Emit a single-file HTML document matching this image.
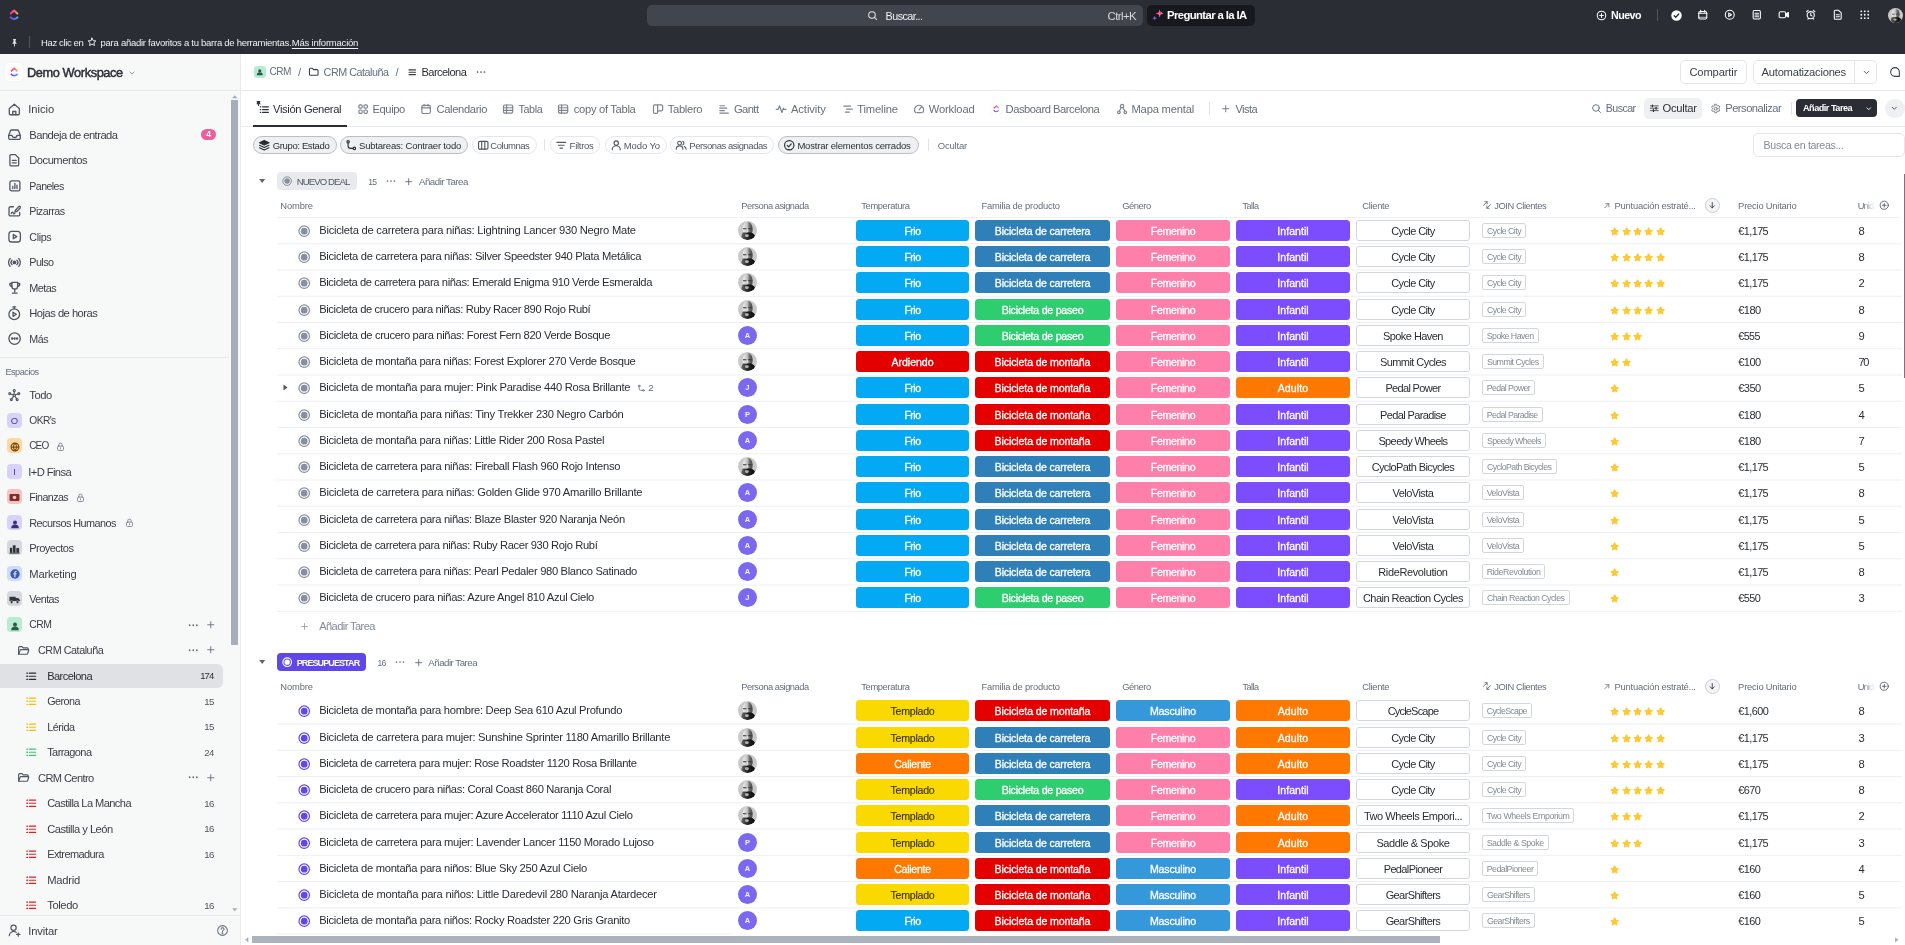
<!DOCTYPE html>
<html lang="es"><head><meta charset="utf-8"><title>Barcelona | CRM</title>
<style>
*{box-sizing:border-box;margin:0;padding:0}
html,body{width:1905px;height:945px;overflow:hidden;background:#fff}
body{font-family:"Liberation Sans",sans-serif;font-size:11.2px;color:#2a2e34;position:relative}
#app{position:absolute;left:0;top:0;width:1905px;height:945px;overflow:hidden;will-change:transform}
.a{position:absolute;white-space:nowrap}
svg{display:block;overflow:visible}
.ic{position:absolute}
#top{left:0;top:0;width:1905px;height:54px;background:#2a2e34}
#side{left:0;top:54px;width:240px;height:891px;background:#f7f8f8}
#sideb{left:240px;top:54px;width:1px;height:891px;background:#e8eaed}
.hl{height:1px;background:#e8eaed}
.vl{width:1px;background:#e0e3e7}
.chip{border:1px solid #e4e6ea;border-radius:9px;background:#fff}
.chip.on{background:#eef0f2;border-color:#b9bec7}
.rb{height:1px;background:#edeff2}
.pill{height:21px;line-height:22px;border-radius:3.5px;text-align:center;color:#fff;font-size:10.6px;-webkit-text-stroke:.3px currentColor}
.cl{height:21px;line-height:20.4px;border-radius:3px;text-align:center;color:#2a2e34;font-size:11px;border:1px solid #d3d7dd;background:#fff;left:1356.3px;width:113.3px;overflow:hidden}
.tag{left:1481.7px;height:15px;line-height:14.6px;border:1px solid #d3d7dd;border-radius:2px;font-size:8.8px;color:#838b97;text-align:center;background:#fff;overflow:hidden}
.av{width:19px;height:19px;border-radius:50%;background:#7b68ee;color:rgba(255,255,255,.9);font-size:7.5px;font-weight:700;text-align:center;line-height:19px;letter-spacing:0}
</style></head>
<body>
<div id="app">
<div class="a" id="top"></div>
<svg class="ic" style="left:9px;top:9px" width="10" height="12" viewBox="0 0 16 19" fill="none"><defs><linearGradient id="la1" x1="0" x2="1" y1="0" y2="0"><stop offset="0" stop-color="#ff2fa8"/><stop offset=".55" stop-color="#ff5d8a"/><stop offset="1" stop-color="#ffb52e"/></linearGradient><linearGradient id="lb1" x1="0" x2="1" y1="0" y2="0"><stop offset="0" stop-color="#8b3dff"/><stop offset=".5" stop-color="#6f6bff"/><stop offset="1" stop-color="#3fb4ff"/></linearGradient></defs><path d="M1.800 8 8 2.400l6.200 5.600" stroke="url(#la1)" stroke-width="3.100" stroke-linejoin="miter"/><path d="M1.700 12.300c3.400 5 9.200 5 12.600 0" stroke="url(#lb1)" stroke-width="3.100"/></svg>
<div class="a " style="left:647px;top:5px;width:496px;height:21px;background:#41454d;border-radius:5px"></div>
<svg class="ic" style="left:867px;top:10px" width="11" height="11" viewBox="0 0 16 16" fill="none" stroke="#e4e6ea" stroke-width="1.5" stroke-linecap="round" stroke-linejoin="round" ><circle cx="7.200" cy="7.200" r="4.800"/><path d="m10.800 10.800 3 3"/></svg>
<div class="a " style="left:885.6px;top:5.8px;height:20px;line-height:20px;font-size:10.8px;letter-spacing:-0.576px;color:#f0f1f3;">Buscar...</div>
<div class="a " style="left:1107.6px;top:5.8px;height:20px;line-height:20px;font-size:11.4px;letter-spacing:-0.593px;color:#d5d8dd;">Ctrl+K</div>
<div class="a " style="left:1147.3px;top:5px;width:107.5px;height:21px;background:#17191e;border-radius:5px"></div>
<svg class="ic" style="left:1152px;top:9px" width="12" height="12" viewBox="0 0 12 12"><path d="M7.600 0.400 8.600 3.400 11.600 4.400 8.600 5.400 7.600 8.400 6.600 5.400 3.600 4.400 6.600 3.400z" fill="#ff5fa2"/><path d="M8.600 1.600 9 3 10.400 3.400 9 4z" fill="#ffb13d"/><path d="M2.600 6.800 3.200 8.600 5 9.200 3.200 9.800 2.600 11.600 2 9.800 0.200 9.200 2 8.600z" fill="#7b68ee"/></svg>
<div class="a " style="left:1167px;top:5.3px;height:20px;line-height:20px;font-size:11.3px;letter-spacing:-0.601px;font-weight:700;color:#fff;">Preguntar a la IA</div>
<svg class="ic" style="left:1596.3px;top:9.7px" width="11" height="11" viewBox="0 0 16 16" fill="none" stroke="#fff" stroke-width="1.5" stroke-linecap="round" stroke-linejoin="round" ><circle cx="8" cy="8" r="6.200"/><path d="M8 5.200v5.600M5.200 8h5.600"/></svg>
<div class="a " style="left:1611px;top:5.3px;height:20px;line-height:20px;font-size:10.7px;letter-spacing:-0.534px;font-weight:700;color:#fff;">Nuevo</div>
<div class="a " style="left:1657px;top:9px;width:1px;height:12px;background:#50555e"></div>
<svg class="ic" style="left:1670.500px;top:9.700px" width="11" height="11" viewBox="0 0 16 16"><circle cx="8" cy="8" r="7.600" fill="#fff"/><path d="m4.600 8.300 2.300 2.300 4.400-4.800" fill="none" stroke="#2a2e34" stroke-width="1.900" stroke-linecap="round" stroke-linejoin="round"/></svg>
<svg class="ic" style="left:1697.25px;top:9.45px" width="11.5" height="11.5" viewBox="0 0 16 16" fill="none" stroke="#fff" stroke-width="1.5" stroke-linecap="round" stroke-linejoin="round" ><rect x="2.400" y="3.400" width="11.200" height="10.400" rx="2"/><path d="M2.400 6h11.200M5.200 1.800v2.200M10.800 1.800v2.200" /><path d="M2.400 11.600h11.200" opacity=".55"/></svg>
<svg class="ic" style="left:1724.25px;top:9.45px" width="11.5" height="11.5" viewBox="0 0 16 16" fill="none" stroke="#fff" stroke-width="1.5" stroke-linecap="round" stroke-linejoin="round" ><circle cx="8" cy="8" r="6.200"/><path d="M6.600 5.600v4.800l3.800-2.400z"/></svg>
<svg class="ic" style="left:1751.25px;top:9.45px" width="11.5" height="11.5" viewBox="0 0 16 16" fill="none" stroke="#fff" stroke-width="1.5" stroke-linecap="round" stroke-linejoin="round" ><rect x="3" y="2.200" width="10" height="11.600" rx="1.600"/><path d="M5.600 6h4.800M5.600 8.400h4.800M5.600 10.800h4.800"/></svg>
<svg class="ic" style="left:1778.25px;top:9.45px" width="11.5" height="11.5" viewBox="0 0 16 16" fill="none" stroke="#fff" stroke-width="1.5" stroke-linecap="round" stroke-linejoin="round" color="#fff"><rect x="1.600" y="3.800" width="9" height="8.400" rx="2"/><path d="m10.600 7 3.800-2.200v6.400L10.600 9z" fill="currentColor"/></svg>
<svg class="ic" style="left:1805.25px;top:9.45px" width="11.5" height="11.5" viewBox="0 0 16 16" fill="none" stroke="#fff" stroke-width="1.5" stroke-linecap="round" stroke-linejoin="round" ><circle cx="8" cy="8.600" r="5"/><path d="M8 6v2.800l1.800 1M2.200 3.800 4.400 2M13.800 3.800 11.600 2M4 14.200l1-1.200M12 14.200 11 13"/></svg>
<svg class="ic" style="left:1832.25px;top:9.45px" width="11.5" height="11.5" viewBox="0 0 16 16" fill="none" stroke="#fff" stroke-width="1.5" stroke-linecap="round" stroke-linejoin="round" ><path d="M3.200 3.200A1.400 1.400 0 0 1 4.600 1.800h4.600l3.600 3.600v7.400a1.400 1.400 0 0 1-1.400 1.400H4.600a1.400 1.400 0 0 1-1.400-1.400z"/><path d="M5.800 8h4.400M5.800 10.800h4.400"/></svg>
<svg class="ic" style="left:1859.25px;top:9.45px" width="11.5" height="11.5" viewBox="0 0 16 16" fill="none" stroke="none" stroke-width="1.4" stroke-linecap="round" stroke-linejoin="round" ><circle cx="3.2" cy="3.2" r="1.250" fill="#fff" stroke="none"/><circle cx="3.2" cy="8" r="1.250" fill="#fff" stroke="none"/><circle cx="3.2" cy="12.8" r="1.250" fill="#fff" stroke="none"/><circle cx="8" cy="3.2" r="1.250" fill="#fff" stroke="none"/><circle cx="8" cy="8" r="1.250" fill="#fff" stroke="none"/><circle cx="8" cy="12.8" r="1.250" fill="#fff" stroke="none"/><circle cx="12.8" cy="3.2" r="1.250" fill="#fff" stroke="none"/><circle cx="12.8" cy="8" r="1.250" fill="#fff" stroke="none"/><circle cx="12.8" cy="12.8" r="1.250" fill="#fff" stroke="none"/></svg>
<svg class="ic" style="left:1888px;top:7.5px" width="15" height="15" viewBox="0 0 20 20"><defs><clipPath id="ac1"><circle cx="10" cy="10" r="10"/></clipPath><linearGradient id="ag1" x1="0" x2="1" y1="0" y2="0"><stop offset="0" stop-color="#f1f1f1"/><stop offset=".45" stop-color="#c4c4c4"/><stop offset=".7" stop-color="#6a6a6a"/><stop offset="1" stop-color="#454545"/></linearGradient><linearGradient id="ab1" x1="0" x2="1" y1="0" y2="0"><stop offset="0" stop-color="#6e6e6e"/><stop offset=".4" stop-color="#2a2a2a"/><stop offset="1" stop-color="#0a0a0a"/></linearGradient><filter id="af1" x="-10%" y="-10%" width="120%" height="120%"><feGaussianBlur stdDeviation=".6"/></filter></defs><g clip-path="url(#ac1)"><rect width="20" height="20" fill="#c9c9c9"/><g filter="url(#af1)"><ellipse cx="10.200" cy="8.300" rx="5.300" ry="7.400" fill="url(#ag1)"/><path d="M5.300 7.500h3.500v1.200H5.300zM10.700 7.500h3.600v1.200h-3.600z" fill="#303030"/><path d="M9.300 8.500h1.300v3H9.300z" fill="#dcdcdc"/><path d="M4.800 12.600c1.500-.9 3.200.2 5.200-.4 2-.6 3.900-.3 5.200.4l2.600 2.400c-.8 3.400-4.400 5.400-7.800 5.400s-5.600-1.500-6.600-4z" fill="url(#ab1)"/><ellipse cx="9.300" cy="15.300" rx="2" ry="1.800" fill="#b0b0b0"/><ellipse cx="9.800" cy="13.400" rx="1.300" ry=".55" fill="#111"/></g></g></svg>
<svg class="ic" style="left:9.5px;top:37.5px" width="9" height="9" viewBox="0 0 16 16" fill="none" stroke="#e4e6ea" stroke-width="1.6" stroke-linecap="round" stroke-linejoin="round" color="#e4e6ea"><path d="M5.200 1.800h5.600v1l-1 .8v3.600l2 2.200v1H4.200v-1l2-2.200V3.600l-1-.8z" fill="currentColor" stroke="none"/><path d="M8 10.400v4"/></svg>
<div class="a " style="left:29px;top:36px;width:1px;height:12px;background:#50555e"></div>
<div class="a " style="left:41.1px;top:32.6px;height:20px;line-height:20px;font-size:9.5px;letter-spacing:-0.378px;color:#f0f1f3;">Haz clic en</div>
<svg class="ic" style="left:86.5px;top:37px" width="10" height="10" viewBox="0 0 16 16" fill="none" stroke="#f0f1f3" stroke-width="1.5" stroke-linecap="round" stroke-linejoin="round" ><path d="m8 1.800 1.900 4 4.300.5-3.200 3 .9 4.300L8 11.400l-3.900 2.200.9-4.300-3.200-3 4.300-.5z"/></svg>
<div class="a " style="left:100.6px;top:32.6px;height:20px;line-height:20px;font-size:9.5px;letter-spacing:-0.269px;color:#f0f1f3;">para añadir favoritos a tu barra de herramientas.</div>
<div class="a " style="left:291.8px;top:32.6px;height:20px;line-height:20px;font-size:9.5px;letter-spacing:-0.222px;color:#f0f1f3;text-decoration:underline;text-underline-offset:1.5px">Más información</div>
<div class="a" id="side"></div><div class="a" id="sideb"></div>
<div class="a hl" style="left:0px;top:90px;width:240px;height:1px;"></div>
<div class="a " style="left:5px;top:63px;width:17.5px;height:17.5px;background:#fff;border-radius:4px;box-shadow:0 0 1px rgba(0,0,0,.12)"></div>
<svg class="ic" style="left:9.6px;top:66.74px" width="8.6" height="10.32" viewBox="0 0 16 19" fill="none"><defs><linearGradient id="la2" x1="0" x2="1" y1="0" y2="0"><stop offset="0" stop-color="#ff2fa8"/><stop offset=".55" stop-color="#ff5d8a"/><stop offset="1" stop-color="#ffb52e"/></linearGradient><linearGradient id="lb2" x1="0" x2="1" y1="0" y2="0"><stop offset="0" stop-color="#8b3dff"/><stop offset=".5" stop-color="#6f6bff"/><stop offset="1" stop-color="#3fb4ff"/></linearGradient></defs><path d="M1.800 8 8 2.400l6.200 5.600" stroke="url(#la2)" stroke-width="3.100" stroke-linejoin="miter"/><path d="M1.700 12.300c3.400 5 9.200 5 12.600 0" stroke="url(#lb2)" stroke-width="3.100"/></svg>
<div class="a " style="left:26.9px;top:62.9px;height:20px;line-height:20px;font-size:12.8px;letter-spacing:-0.396px;color:#2a2e34;-webkit-text-stroke:.45px #2a2e34">Demo Workspace</div>
<svg class="ic" style="left:127.5px;top:68.5px" width="8" height="8" viewBox="0 0 16 16" fill="none" stroke="#838b97" stroke-width="1.8" stroke-linecap="round" stroke-linejoin="round" ><path d="m4 6 4 4 4-4"/></svg>
<svg class="ic" style="left:7.2px;top:102px" width="14.6" height="14.6" viewBox="0 0 16 16" fill="none" stroke="#4f5762" stroke-width="1.42" stroke-linecap="round" stroke-linejoin="round" color="#4f5762"><path d="M2.5 7.2 8 2.5l5.5 4.7V13a1 1 0 0 1-1 1h-9a1 1 0 0 1-1-1z"/><path d="M6.3 14v-3.6h3.4V14"/></svg>
<div class="a " style="left:28.3px;top:99px;height:20px;line-height:20px;font-size:11.2px;letter-spacing:-0.039px;color:#3a3f47;">Inicio</div>
<svg class="ic" style="left:7px;top:127.33px" width="15" height="15" viewBox="0 0 16 16" fill="none" stroke="#4f5762" stroke-width="1.39" stroke-linecap="round" stroke-linejoin="round" color="#4f5762"><path d="M1.8 9 3.6 4.2a1.5 1.5 0 0 1 1.4-1h6a1.5 1.5 0 0 1 1.4 1L14.2 9v2.8a1.4 1.4 0 0 1-1.4 1.4H3.2a1.4 1.4 0 0 1-1.4-1.4z"/><path d="M1.8 9h3.6a2.6 2.2 0 0 0 5.2 0h3.6"/></svg>
<div class="a " style="left:29.3px;top:124.53px;height:20px;line-height:20px;font-size:11.2px;letter-spacing:-0.526px;color:#3a3f47;">Bandeja de entrada</div>
<svg class="ic" style="left:7.2px;top:153.06px" width="14.6" height="14.6" viewBox="0 0 16 16" fill="none" stroke="#4f5762" stroke-width="1.42" stroke-linecap="round" stroke-linejoin="round" color="#4f5762"><path d="M3.2 3.2A1.4 1.4 0 0 1 4.6 1.8h4.6l3.6 3.6v7.4a1.4 1.4 0 0 1-1.4 1.4H4.6a1.4 1.4 0 0 1-1.4-1.4z"/><path d="M5.8 8h4.4M5.8 10.8h4.4"/></svg>
<div class="a " style="left:29.3px;top:150.06px;height:20px;line-height:20px;font-size:11.2px;letter-spacing:-0.512px;color:#3a3f47;">Documentos</div>
<svg class="ic" style="left:7.6px;top:178.99px" width="13.8" height="13.8" viewBox="0 0 16 16" fill="none" stroke="#4f5762" stroke-width="1.51" stroke-linecap="round" stroke-linejoin="round" color="#4f5762"><rect x="2.2" y="2.2" width="11.6" height="11.6" rx="2"/><path d="M5.6 11V8.6M8 11V5.2M10.4 11V7.2"/></svg>
<div class="a " style="left:29.3px;top:175.59px;height:20px;line-height:20px;font-size:10.6px;letter-spacing:-0.564px;color:#3a3f47;">Paneles</div>
<svg class="ic" style="left:7.15px;top:204.07px" width="14.7" height="14.7" viewBox="0 0 16 16" fill="none" stroke="#4f5762" stroke-width="1.41" stroke-linecap="round" stroke-linejoin="round" color="#4f5762"><path d="M7 3H3.6A1.4 1.4 0 0 0 2.2 4.400v7.200A1.4 1.4 0 0 0 3.6 13h8.800a1.400 1.400 0 0 0 1.400-1.400V9.200"/><path d="m9.200 6.800 3.600-4.000a1.100 1.100 0 0 1 1.600 1.500L10.700 8.200l-2.000.5z"/><path d="M4.600 10.400c.8-1.800 1.800-1.800 2.200-.6s1.200 1 1.800.2"/></svg>
<div class="a " style="left:29.3px;top:201.12px;height:20px;line-height:20px;font-size:10.7px;letter-spacing:-0.479px;color:#3a3f47;">Pizarras</div>
<svg class="ic" style="left:6.85px;top:229.3px" width="15.3" height="15.3" viewBox="0 0 16 16" fill="none" stroke="#4f5762" stroke-width="1.36" stroke-linecap="round" stroke-linejoin="round" color="#4f5762"><rect x="2" y="2.400" width="12" height="11.200" rx="3"/><path d="M6.600 5.800v4.400l3.600-2.200z"/></svg>
<div class="a " style="left:29.3px;top:226.65px;height:20px;line-height:20px;font-size:10.7px;letter-spacing:-0.378px;color:#3a3f47;">Clips</div>
<svg class="ic" style="left:7.05px;top:255.03px" width="14.9" height="14.9" viewBox="0 0 16 16" fill="none" stroke="#4f5762" stroke-width="1.4" stroke-linecap="round" stroke-linejoin="round" color="#4f5762"><circle cx="8" cy="8" r="1.300" fill="currentColor"/><path d="M5.400 5.600a3.400 3.400 0 0 0 0 4.800M10.600 5.600a3.400 3.400 0 0 1 0 4.800M3.400 3.800a6 6 0 0 0 0 8.400M12.600 3.800a6 6 0 0 1 0 8.400"/></svg>
<div class="a " style="left:29.3px;top:252.18px;height:20px;line-height:20px;font-size:10.8px;letter-spacing:-0.576px;color:#3a3f47;">Pulso</div>
<svg class="ic" style="left:6.75px;top:280.26px" width="15.5" height="15.5" viewBox="0 0 16 16" fill="none" stroke="#4f5762" stroke-width="1.34" stroke-linecap="round" stroke-linejoin="round" color="#4f5762"><path d="M5 2.400h6v4a3 3 0 0 1-6 0z"/><path d="M5 3.600H3a2 2 0 0 0 2.200 2.800M11 3.600h2a2 2 0 0 1-2.200 2.800M8 9.400v2.800M5.600 13.600h4.800"/></svg>
<div class="a " style="left:29.3px;top:277.71px;height:20px;line-height:20px;font-size:10.9px;letter-spacing:-0.553px;color:#3a3f47;">Metas</div>
<svg class="ic" style="left:6.25px;top:304.59px" width="16.5" height="16.5" viewBox="0 0 16 16" fill="none" stroke="#4f5762" stroke-width="1.26" stroke-linecap="round" stroke-linejoin="round" color="#4f5762"><circle cx="8" cy="9" r="5.200"/><path d="M6.800 7v4l3.200-2zM6.600 1.800h2.800M8 1.800v2"/></svg>
<div class="a " style="left:29.3px;top:303.24px;height:20px;line-height:20px;font-size:11.2px;letter-spacing:-0.520px;color:#3a3f47;">Hojas de horas</div>
<svg class="ic" style="left:6.9px;top:331.47px" width="15.2" height="15.2" viewBox="0 0 16 16" fill="none" stroke="#4f5762" stroke-width="1.37" stroke-linecap="round" stroke-linejoin="round" color="#4f5762"><circle cx="8" cy="8" r="6"/><circle cx="5.400" cy="8" r=".6" fill="currentColor"/><circle cx="8" cy="8" r=".6" fill="currentColor"/><circle cx="10.600" cy="8" r=".6" fill="currentColor"/></svg>
<div class="a " style="left:29.3px;top:328.77px;height:20px;line-height:20px;font-size:10.7px;letter-spacing:-0.423px;color:#3a3f47;">Más</div>
<div class="a " style="left:201px;top:128.5px;width:15px;height:11.5px;background:#ee5e99;border-radius:6px;color:#fff;font-size:8.5px;font-weight:700;text-align:center;line-height:11.5px;letter-spacing:0">4</div>
<div class="a hl" style="left:0px;top:357px;width:229px;height:1px;"></div>
<div class="a " style="left:5.4px;top:361.6px;height:20px;line-height:20px;font-size:9.2px;letter-spacing:-0.498px;color:#656f7d;">Espacios</div>
<svg class="ic" style="left:7.05px;top:388.05px" width="14.5" height="14.5" viewBox="0 0 16 16" fill="none" stroke="#4f5762" stroke-width="1.25" stroke-linecap="round" stroke-linejoin="round" ><circle cx="8" cy="8" r="1.400"/><circle cx="8" cy="2.800" r="1.100"/><circle cx="3" cy="6.200" r="1.100"/><circle cx="13" cy="6.200" r="1.100"/><circle cx="4.800" cy="12.800" r="1.100"/><circle cx="11.200" cy="12.800" r="1.100"/><path d="M8 6.600V3.900M6.700 7.500 4 6.600M9.300 7.500l2.700-.9M7.200 9.200l-1.800 2.600M8.800 9.200l1.800 2.600"/></svg>
<div class="a " style="left:29.3px;top:385.3px;height:20px;line-height:20px;font-size:11.2px;letter-spacing:-0.445px;color:#3a3f47;">Todo</div>
<div class="a " style="left:7px;top:412.9px;width:15px;height:15px;background:#d8d2fb;color:#46426b;font-size:9.5px;text-align:center;line-height:15.5px;letter-spacing:0;border-radius:4px">O</div>
<div class="a " style="left:29.3px;top:410.8px;height:20px;line-height:20px;font-size:10.2px;letter-spacing:-0.555px;color:#3a3f47;">OKR's</div>
<div class="a " style="left:7px;top:438.4px;width:15px;height:15px;background:#fbd9a0;color:#46426b;font-size:9.5px;text-align:center;line-height:15.5px;letter-spacing:0;border-radius:4px"></div>
<svg class="ic" style="left:9.500px;top:441.5px" width="10" height="10" viewBox="0 0 12 12" fill="none" stroke="#7a4a12" stroke-width="1.500"><circle cx="6" cy="6" r="4.600"/><path d="M1.400 6h9.200M6 1.400c-2.400 2.600-2.400 6.600 0 9.200M6 1.400c2.400 2.600 2.400 6.600 0 9.200"/></svg>
<div class="a " style="left:29.3px;top:436.3px;height:20px;line-height:20px;font-size:10px;letter-spacing:-0.900px;color:#3a3f47;">CEO</div>
<svg class="ic" style="left:54.7px;top:440.6px" width="11" height="11" viewBox="0 0 16 16" fill="none" stroke="#7b8491" stroke-width="1.3" stroke-linecap="round" stroke-linejoin="round" ><rect x="3.600" y="7.400" width="8.800" height="6.400" rx="1.600"/><path d="M5.600 7.400V5.400a2.400 2.400 0 0 1 4.800 0v2M8 10v1.400"/></svg>
<div class="a " style="left:7px;top:463.9px;width:15px;height:15px;background:#d8d2fb;color:#46426b;font-size:9.5px;text-align:center;line-height:15.5px;letter-spacing:0;border-radius:4px">I</div>
<div class="a " style="left:28.3px;top:461.8px;height:20px;line-height:20px;font-size:11.2px;letter-spacing:-0.596px;color:#3a3f47;">I+D Finsa</div>
<div class="a " style="left:7px;top:489.4px;width:15px;height:15px;background:#f7c1c1;color:#46426b;font-size:9.5px;text-align:center;line-height:15.5px;letter-spacing:0;border-radius:4px"></div>
<svg class="ic" style="left:9px;top:493px" width="11" height="9" viewBox="0 0 12 10"><rect x=".5" y="1" width="11" height="8" rx="1.500" fill="#7a2f2f"/><circle cx="6" cy="5" r="2" fill="#f7c1c1"/></svg>
<div class="a " style="left:29.3px;top:487.3px;height:20px;line-height:20px;font-size:10.7px;letter-spacing:-0.575px;color:#3a3f47;">Finanzas</div>
<svg class="ic" style="left:74.5px;top:491.6px" width="11" height="11" viewBox="0 0 16 16" fill="none" stroke="#7b8491" stroke-width="1.3" stroke-linecap="round" stroke-linejoin="round" ><rect x="3.600" y="7.400" width="8.800" height="6.400" rx="1.600"/><path d="M5.600 7.400V5.400a2.400 2.400 0 0 1 4.800 0v2M8 10v1.400"/></svg>
<div class="a " style="left:7px;top:514.9px;width:15px;height:15px;background:#d8d2fb;color:#46426b;font-size:9.5px;text-align:center;line-height:15.5px;letter-spacing:0;border-radius:4px"></div>
<svg class="ic" style="left:8.500px;top:517.5px" width="12" height="11" viewBox="0 0 14 12"><circle cx="7" cy="4.800" r="2.300" fill="#3c2f7a"/><path d="M2.600 11.600a4.400 4.400 0 0 1 8.800 0z" fill="#3c2f7a"/></svg>
<div class="a " style="left:29.3px;top:512.8px;height:20px;line-height:20px;font-size:10.9px;letter-spacing:-0.566px;color:#3a3f47;">Recursos Humanos</div>
<svg class="ic" style="left:123.9px;top:517.1px" width="11" height="11" viewBox="0 0 16 16" fill="none" stroke="#7b8491" stroke-width="1.3" stroke-linecap="round" stroke-linejoin="round" ><rect x="3.600" y="7.400" width="8.800" height="6.400" rx="1.600"/><path d="M5.600 7.400V5.400a2.400 2.400 0 0 1 4.800 0v2M8 10v1.400"/></svg>
<div class="a " style="left:7px;top:540.4px;width:15px;height:15px;background:#d5d8dc;color:#46426b;font-size:9.5px;text-align:center;line-height:15.5px;letter-spacing:0;border-radius:4px"></div>
<svg class="ic" style="left:9px;top:543.5px" width="11" height="10" viewBox="0 0 12 10"><path d="M1 9V3.500h2.500V9zM4.200 9V1h3v8zM8 9V4h3v5z" fill="#2f333a"/><path d="M.5 9.500h11" stroke="#2f333a"/></svg>
<div class="a " style="left:29.3px;top:538.3px;height:20px;line-height:20px;font-size:11.1px;letter-spacing:-0.585px;color:#3a3f47;">Proyectos</div>
<div class="a " style="left:7px;top:565.9px;width:15px;height:15px;background:#cfdcf7;color:#46426b;font-size:9.5px;text-align:center;line-height:15.5px;letter-spacing:0;border-radius:4px"></div>
<svg class="ic" style="left:9.500px;top:569px" width="10" height="10" viewBox="0 0 12 12"><circle cx="6" cy="6" r="5.600" fill="#3b5ba8"/><path d="M6.600 10V6.600h1.200l.2-1.400H6.600v-.8c0-.4.200-.7.700-.7H8V2.500c-.2 0-.6-.1-1.100-.1-1.100 0-1.800.7-1.800 1.900v.9H4v1.400h1.100V10z" fill="#cfdcf7"/></svg>
<div class="a " style="left:29.3px;top:563.8px;height:20px;line-height:20px;font-size:11.2px;letter-spacing:-0.212px;color:#3a3f47;">Marketing</div>
<div class="a " style="left:7px;top:591.4px;width:15px;height:15px;background:#d5d8dc;color:#46426b;font-size:9.5px;text-align:center;line-height:15.5px;letter-spacing:0;border-radius:4px"></div>
<svg class="ic" style="left:8.800px;top:594.7px" width="11.500" height="9.500" viewBox="0 0 13 10"><path d="M.5 1.500h7v5h-7zM7.500 3h2.700l2.300 2.200v1.300h-5z" fill="#2f333a"/><circle cx="3" cy="7.600" r="1.600" fill="#2f333a" stroke="#d5d8dc" stroke-width=".6"/><circle cx="9.600" cy="7.600" r="1.600" fill="#2f333a" stroke="#d5d8dc" stroke-width=".6"/></svg>
<div class="a " style="left:29.3px;top:589.3px;height:20px;line-height:20px;font-size:10.8px;letter-spacing:-0.584px;color:#3a3f47;">Ventas</div>
<div class="a " style="left:7px;top:616.9px;width:15px;height:15px;background:#b9ead3;color:#46426b;font-size:9.5px;text-align:center;line-height:15.5px;letter-spacing:0;border-radius:4px"></div>
<svg class="ic" style="left:8.500px;top:619.5px" width="12" height="11" viewBox="0 0 14 12"><circle cx="7" cy="4.800" r="2.300" fill="#2a5a45"/><path d="M2.600 11.600a4.400 4.400 0 0 1 8.800 0z" fill="#2a5a45"/></svg>
<div class="a " style="left:29.3px;top:614.8px;height:20px;line-height:20px;font-size:10.4px;letter-spacing:-0.504px;color:#3a3f47;">CRM</div>
<svg class="ic" style="left:186.75px;top:618.55px" width="12.5" height="12.5" viewBox="0 0 16 16" fill="none" stroke="none" stroke-width="1.4" stroke-linecap="round" stroke-linejoin="round" color="#656f7d"><circle cx="3.400" cy="8" r="1.150" fill="currentColor" stroke="none"/><circle cx="8" cy="8" r="1.150" fill="currentColor" stroke="none"/><circle cx="12.600" cy="8" r="1.150" fill="currentColor" stroke="none"/></svg>
<svg class="ic" style="left:205.75px;top:620.05px" width="9.5" height="9.5" viewBox="0 0 16 16" fill="none" stroke="#656f7d" stroke-width="1.5" stroke-linecap="round" stroke-linejoin="round" ><path d="M8 2.800v10.400M2.800 8h10.400"/></svg>
<div class="a " style="left:0px;top:664px;width:222.5px;height:24px;background:#dfe1e4;border-radius:0 6px 6px 0"></div>
<svg class="ic" style="left:16.5px;top:643.9px" width="13" height="13" viewBox="0 0 16 16" fill="none" stroke="#4f5762" stroke-width="1.4" stroke-linecap="round" stroke-linejoin="round" ><path d="M2 12.600V4.400a1.200 1.200 0 0 1 1.200-1.200h3l1.400 1.600h5a1.200 1.200 0 0 1 1.200 1.200v1"/><path d="M2 12.600 3.800 7.800a1.200 1.200 0 0 1 1.100-.8h8.700a.8.800 0 0 1 .8 1.100l-1.500 3.800a1.200 1.200 0 0 1-1.100.7z"/></svg>
<div class="a " style="left:38px;top:640.2px;height:20px;line-height:20px;font-size:10.8px;letter-spacing:-0.464px;color:#3a3f47;">CRM Cataluña</div>
<svg class="ic" style="left:186.75px;top:643.95px" width="12.5" height="12.5" viewBox="0 0 16 16" fill="none" stroke="none" stroke-width="1.4" stroke-linecap="round" stroke-linejoin="round" color="#656f7d"><circle cx="3.400" cy="8" r="1.150" fill="currentColor" stroke="none"/><circle cx="8" cy="8" r="1.150" fill="currentColor" stroke="none"/><circle cx="12.600" cy="8" r="1.150" fill="currentColor" stroke="none"/></svg>
<svg class="ic" style="left:205.75px;top:645.45px" width="9.5" height="9.5" viewBox="0 0 16 16" fill="none" stroke="#656f7d" stroke-width="1.5" stroke-linecap="round" stroke-linejoin="round" ><path d="M8 2.800v10.400M2.800 8h10.400"/></svg>
<svg class="ic" style="left:25.45px;top:669.65px" width="12.5" height="12.5" viewBox="0 0 16 16" fill="none" stroke="#2a2e34" stroke-width="1.55" stroke-linecap="round" stroke-linejoin="round" ><path d="M5.600 4h8M5.600 8h8M5.600 12h8"/><path d="M2.400 4h.8M2.400 8h.8M2.400 12h.8" stroke-width="1.800"/></svg>
<div class="a " style="left:47.2px;top:665.7px;height:20px;line-height:20px;font-size:11.1px;letter-spacing:-0.573px;color:#2a2e34;">Barcelona</div>
<div class="a " style="left:200.2px;top:666px;height:20px;line-height:20px;font-size:9.5px;letter-spacing:-0.883px;color:#2a2e34;">174</div>
<svg class="ic" style="left:25.45px;top:695.15px" width="12.5" height="12.5" viewBox="0 0 16 16" fill="none" stroke="#f6c000" stroke-width="1.55" stroke-linecap="round" stroke-linejoin="round" ><path d="M5.600 4h8M5.600 8h8M5.600 12h8"/><path d="M2.400 4h.8M2.400 8h.8M2.400 12h.8" stroke-width="1.800"/></svg>
<div class="a " style="left:47.2px;top:691.2px;height:20px;line-height:20px;font-size:10.8px;letter-spacing:-0.522px;color:#3a3f47;">Gerona</div>
<div class="a " style="left:204.3px;top:691.5px;height:20px;line-height:20px;font-size:9.7px;letter-spacing:-0.688px;color:#4f5762;">15</div>
<svg class="ic" style="left:25.45px;top:720.65px" width="12.5" height="12.5" viewBox="0 0 16 16" fill="none" stroke="#f6c000" stroke-width="1.55" stroke-linecap="round" stroke-linejoin="round" ><path d="M5.600 4h8M5.600 8h8M5.600 12h8"/><path d="M2.400 4h.8M2.400 8h.8M2.400 12h.8" stroke-width="1.800"/></svg>
<div class="a " style="left:47.2px;top:716.7px;height:20px;line-height:20px;font-size:10.8px;letter-spacing:-0.442px;color:#3a3f47;">Lérida</div>
<div class="a " style="left:204.3px;top:717px;height:20px;line-height:20px;font-size:9.7px;letter-spacing:-0.688px;color:#4f5762;">15</div>
<svg class="ic" style="left:25.45px;top:746.15px" width="12.5" height="12.5" viewBox="0 0 16 16" fill="none" stroke="#3ec57a" stroke-width="1.55" stroke-linecap="round" stroke-linejoin="round" ><path d="M5.600 4h8M5.600 8h8M5.600 12h8"/><path d="M2.400 4h.8M2.400 8h.8M2.400 12h.8" stroke-width="1.800"/></svg>
<div class="a " style="left:47.2px;top:742.2px;height:20px;line-height:20px;font-size:11px;letter-spacing:-0.589px;color:#3a3f47;">Tarragona</div>
<div class="a " style="left:204.3px;top:742.5px;height:20px;line-height:20px;font-size:9.5px;letter-spacing:-0.583px;color:#4f5762;">24</div>
<svg class="ic" style="left:16.5px;top:771.4px" width="13" height="13" viewBox="0 0 16 16" fill="none" stroke="#4f5762" stroke-width="1.4" stroke-linecap="round" stroke-linejoin="round" ><path d="M2 12.600V4.400a1.200 1.200 0 0 1 1.200-1.200h3l1.400 1.600h5a1.200 1.200 0 0 1 1.200 1.200v1"/><path d="M2 12.600 3.800 7.800a1.200 1.200 0 0 1 1.100-.8h8.700a.8.800 0 0 1 .8 1.100l-1.500 3.800a1.200 1.200 0 0 1-1.100.7z"/></svg>
<div class="a " style="left:38px;top:767.7px;height:20px;line-height:20px;font-size:11.1px;letter-spacing:-0.608px;color:#3a3f47;">CRM Centro</div>
<svg class="ic" style="left:186.75px;top:771.45px" width="12.5" height="12.5" viewBox="0 0 16 16" fill="none" stroke="none" stroke-width="1.4" stroke-linecap="round" stroke-linejoin="round" color="#656f7d"><circle cx="3.400" cy="8" r="1.150" fill="currentColor" stroke="none"/><circle cx="8" cy="8" r="1.150" fill="currentColor" stroke="none"/><circle cx="12.600" cy="8" r="1.150" fill="currentColor" stroke="none"/></svg>
<svg class="ic" style="left:205.75px;top:772.95px" width="9.5" height="9.5" viewBox="0 0 16 16" fill="none" stroke="#656f7d" stroke-width="1.5" stroke-linecap="round" stroke-linejoin="round" ><path d="M8 2.800v10.400M2.800 8h10.400"/></svg>
<svg class="ic" style="left:25.45px;top:797.15px" width="12.5" height="12.5" viewBox="0 0 16 16" fill="none" stroke="#e02020" stroke-width="1.55" stroke-linecap="round" stroke-linejoin="round" ><path d="M5.600 4h8M5.600 8h8M5.600 12h8"/><path d="M2.400 4h.8M2.400 8h.8M2.400 12h.8" stroke-width="1.800"/></svg>
<div class="a " style="left:47.2px;top:793.2px;height:20px;line-height:20px;font-size:11.1px;letter-spacing:-0.587px;color:#3a3f47;">Castilla La Mancha</div>
<div class="a " style="left:204.3px;top:793.5px;height:20px;line-height:20px;font-size:9.7px;letter-spacing:-0.688px;color:#4f5762;">16</div>
<svg class="ic" style="left:25.45px;top:822.65px" width="12.5" height="12.5" viewBox="0 0 16 16" fill="none" stroke="#e02020" stroke-width="1.55" stroke-linecap="round" stroke-linejoin="round" ><path d="M5.600 4h8M5.600 8h8M5.600 12h8"/><path d="M2.400 4h.8M2.400 8h.8M2.400 12h.8" stroke-width="1.800"/></svg>
<div class="a " style="left:47.2px;top:818.7px;height:20px;line-height:20px;font-size:11.2px;letter-spacing:-0.526px;color:#3a3f47;">Castilla y León</div>
<div class="a " style="left:204.3px;top:819px;height:20px;line-height:20px;font-size:9.7px;letter-spacing:-0.688px;color:#4f5762;">16</div>
<svg class="ic" style="left:25.45px;top:848.15px" width="12.5" height="12.5" viewBox="0 0 16 16" fill="none" stroke="#e02020" stroke-width="1.55" stroke-linecap="round" stroke-linejoin="round" ><path d="M5.600 4h8M5.600 8h8M5.600 12h8"/><path d="M2.400 4h.8M2.400 8h.8M2.400 12h.8" stroke-width="1.800"/></svg>
<div class="a " style="left:47.2px;top:844.2px;height:20px;line-height:20px;font-size:11px;letter-spacing:-0.585px;color:#3a3f47;">Extremadura</div>
<div class="a " style="left:204.3px;top:844.5px;height:20px;line-height:20px;font-size:9.7px;letter-spacing:-0.688px;color:#4f5762;">16</div>
<svg class="ic" style="left:25.45px;top:873.65px" width="12.5" height="12.5" viewBox="0 0 16 16" fill="none" stroke="#e02020" stroke-width="1.55" stroke-linecap="round" stroke-linejoin="round" ><path d="M5.600 4h8M5.600 8h8M5.600 12h8"/><path d="M2.400 4h.8M2.400 8h.8M2.400 12h.8" stroke-width="1.800"/></svg>
<div class="a " style="left:47.2px;top:869.7px;height:20px;line-height:20px;font-size:11.2px;letter-spacing:-0.235px;color:#3a3f47;">Madrid</div>
<svg class="ic" style="left:25.45px;top:899.15px" width="12.5" height="12.5" viewBox="0 0 16 16" fill="none" stroke="#e02020" stroke-width="1.55" stroke-linecap="round" stroke-linejoin="round" ><path d="M5.600 4h8M5.600 8h8M5.600 12h8"/><path d="M2.400 4h.8M2.400 8h.8M2.400 12h.8" stroke-width="1.800"/></svg>
<div class="a " style="left:47.2px;top:895.2px;height:20px;line-height:20px;font-size:11.2px;letter-spacing:-0.389px;color:#3a3f47;">Toledo</div>
<div class="a " style="left:204.3px;top:895.5px;height:20px;line-height:20px;font-size:9.7px;letter-spacing:-0.688px;color:#4f5762;">16</div>
<div class="a " style="left:231px;top:100px;width:7.3px;height:545px;background:#a8aeb9"></div>
<svg class="ic" style="left:232px;top:95px" width="5.500" height="3.500" viewBox="0 0 7 4"><path d="M0 4 3.500 0 7 4z" fill="#a8aeb9"/></svg>
<svg class="ic" style="left:232px;top:908px" width="5.500" height="3.500" viewBox="0 0 7 4"><path d="M0 0 3.500 4 7 0z" fill="#a8aeb9"/></svg>
<div class="a " style="left:0px;top:915px;width:240px;height:30px;background:#f7f8f8"></div>
<div class="a hl" style="left:0px;top:915px;width:240px;height:1px;"></div>
<svg class="ic" style="left:6.5px;top:922.8px" width="15" height="15" viewBox="0 0 16 16" fill="none" stroke="#4f5762" stroke-width="1.25" stroke-linecap="round" stroke-linejoin="round" ><circle cx="7" cy="5" r="2.800"/><path d="M2.400 13.600a4.600 4.600 0 0 1 7.400-3.600M12 10.400v3.600M10.200 12.200h3.600"/></svg>
<div class="a " style="left:28.3px;top:920.7px;height:20px;line-height:20px;font-size:11.2px;letter-spacing:-0.173px;color:#3a3f47;">Invitar</div>
<svg class="ic" style="left:216px;top:923.8px" width="13" height="13" viewBox="0 0 16 16" fill="none" stroke="#656f7d" stroke-width="1.25" stroke-linecap="round" stroke-linejoin="round" color="#656f7d"><circle cx="8" cy="8" r="6"/><path d="M6.300 6.300a1.800 1.800 0 1 1 2.600 1.600c-.6.300-.9.700-.9 1.300"/><circle cx="8" cy="11.300" r=".5" fill="currentColor"/></svg>
<svg class="ic" style="left:244.800px;top:936.500px" width="3.500" height="5.500" viewBox="0 0 4 7"><path d="M4 0 0 3.500 4 7z" fill="#a8aeb9"/></svg>
<div class="a hl" style="left:241px;top:90px;width:1664px;height:1px;"></div>
<div class="a " style="left:254px;top:66px;width:11.5px;height:11.5px;background:#b9ead3;border-radius:3px"></div>
<svg class="ic" style="left:255px;top:67px" width="9.500" height="9" viewBox="0 0 14 12"><circle cx="7" cy="4.800" r="2.300" fill="#2a5a45"/><path d="M2.600 11.600a4.400 4.400 0 0 1 8.800 0z" fill="#2a5a45"/></svg>
<div class="a " style="left:269.6px;top:62.2px;height:20px;line-height:20px;font-size:10.1px;letter-spacing:-0.539px;color:#656f7d;">CRM</div>
<div class="a " style="left:298px;top:62.2px;height:20px;line-height:20px;font-size:11.2px;letter-spacing:0.000px;color:#656f7d;">/</div>
<svg class="ic" style="left:308.05px;top:66.25px" width="11.5" height="11.5" viewBox="0 0 16 16" fill="none" stroke="#3a3f47" stroke-width="1.5" stroke-linecap="round" stroke-linejoin="round" ><path d="M2 4.600a1.400 1.400 0 0 1 1.400-1.400h2.800l1.600 1.800h4.800A1.400 1.400 0 0 1 14 6.400v5a1.400 1.400 0 0 1-1.400 1.400H3.400A1.400 1.400 0 0 1 2 11.400z"/></svg>
<div class="a " style="left:323.6px;top:62.2px;height:20px;line-height:20px;font-size:10.8px;letter-spacing:-0.491px;color:#656f7d;">CRM Cataluña</div>
<div class="a " style="left:395.5px;top:62.2px;height:20px;line-height:20px;font-size:11.2px;letter-spacing:0.000px;color:#656f7d;">/</div>
<svg class="ic" style="left:406.75px;top:66.75px" width="10.5" height="10.5" viewBox="0 0 16 16" fill="none" stroke="#3a3f47" stroke-width="1.6" stroke-linecap="round" stroke-linejoin="round" ><path d="M3 4.400h10M3 8h10M3 11.600h10"/></svg>
<div class="a " style="left:421.5px;top:62.2px;height:20px;line-height:20px;font-size:11.1px;letter-spacing:-0.573px;color:#2a2e34;">Barcelona</div>
<svg class="ic" style="left:475px;top:66.3px" width="12" height="12" viewBox="0 0 16 16" fill="none" stroke="none" stroke-width="1.4" stroke-linecap="round" stroke-linejoin="round" color="#4f5762"><circle cx="3.400" cy="8" r="1.150" fill="currentColor" stroke="none"/><circle cx="8" cy="8" r="1.150" fill="currentColor" stroke="none"/><circle cx="12.600" cy="8" r="1.150" fill="currentColor" stroke="none"/></svg>
<div class="a " style="left:1680px;top:60px;width:67px;height:24px;border:1px solid #e4e6ea;border-radius:5px;background:#fff"></div>
<div class="a " style="left:1689.4px;top:62.2px;height:20px;line-height:20px;font-size:11.2px;letter-spacing:-0.135px;color:#3a3f47;">Compartir</div>
<div class="a " style="left:1753px;top:60px;width:124px;height:24px;border:1px solid #e4e6ea;border-radius:5px;background:#fff"></div>
<div class="a " style="left:1761.6px;top:62.2px;height:20px;line-height:20px;font-size:11.2px;letter-spacing:-0.247px;color:#3a3f47;">Automatizaciones</div>
<div class="a " style="left:1854px;top:61px;width:1px;height:22px;background:#e4e6ea"></div>
<svg class="ic" style="left:1861.5px;top:68px" width="9" height="9" viewBox="0 0 16 16" fill="none" stroke="#4f5762" stroke-width="1.7" stroke-linecap="round" stroke-linejoin="round" ><path d="m4 6 4 4 4-4"/></svg>
<svg class="ic" style="left:1889px;top:66px" width="12" height="12" viewBox="0 0 16 16" fill="none" stroke="#3a3f47" stroke-width="1.4" stroke-linecap="round" stroke-linejoin="round" ><path d="M13.800 13.800H8A5.800 5.800 0 1 1 13.800 8z"/></svg>
<div class="a hl" style="left:241px;top:126px;width:1664px;height:1px;"></div>
<div class="a " style="left:253px;top:125px;width:94px;height:2px;background:#2a2e34"></div>
<svg class="ic" style="left:257.9px;top:103.3px" width="12.2" height="12.2" viewBox="0 0 16 16" fill="none" stroke="#2a2e34" stroke-width="1.55" stroke-linecap="round" stroke-linejoin="round" ><path d="M6 5h7.600M6 8.600h7.600M6 12.200h7.600"/><path d="M3 5h.6M3 8.600h.6M3 12.200h.6" stroke-width="1.700"/></svg>
<div class="a " style="left:273px;top:99px;height:20px;line-height:20px;font-size:11.2px;letter-spacing:-0.353px;color:#2a2e34;">Visión General</div>
<svg class="ic" style="left:356.9px;top:102.8px" width="12.2" height="12.2" viewBox="0 0 16 16" fill="none" stroke="#7b8491" stroke-width="1.55" stroke-linecap="round" stroke-linejoin="round" ><rect x="2.400" y="2.400" width="4.400" height="4.400" rx="1.500"/><rect x="9.200" y="2.400" width="4.400" height="4.400" rx="1.500"/><rect x="2.400" y="9.200" width="4.400" height="4.400" rx="1.500"/><rect x="9.200" y="9.200" width="4.400" height="4.400" rx="1.500"/></svg>
<div class="a " style="left:372.4px;top:99px;height:20px;line-height:20px;font-size:11.2px;letter-spacing:-0.383px;color:#656f7d;">Equipo</div>
<svg class="ic" style="left:420.4px;top:102.8px" width="12.2" height="12.2" viewBox="0 0 16 16" fill="none" stroke="#7b8491" stroke-width="1.55" stroke-linecap="round" stroke-linejoin="round" ><rect x="2.400" y="3.200" width="11.200" height="10.600" rx="2"/><path d="M2.400 6.400h11.200M5.400 1.800v2M10.600 1.800v2"/></svg>
<div class="a " style="left:436.4px;top:99px;height:20px;line-height:20px;font-size:11.2px;letter-spacing:-0.343px;color:#656f7d;">Calendario</div>
<svg class="ic" style="left:501.9px;top:102.8px" width="12.2" height="12.2" viewBox="0 0 16 16" fill="none" stroke="#7b8491" stroke-width="1.55" stroke-linecap="round" stroke-linejoin="round" ><rect x="2" y="2.600" width="12" height="10.800" rx="1.800"/><path d="M2 6.200h12M2 9.800h12M6 2.600v10.800"/></svg>
<div class="a " style="left:518.5px;top:99px;height:20px;line-height:20px;font-size:10.8px;letter-spacing:-0.402px;color:#656f7d;">Tabla</div>
<svg class="ic" style="left:556.9px;top:102.8px" width="12.2" height="12.2" viewBox="0 0 16 16" fill="none" stroke="#7b8491" stroke-width="1.55" stroke-linecap="round" stroke-linejoin="round" ><rect x="2" y="2.600" width="12" height="10.800" rx="1.800"/><path d="M2 6.200h12M2 9.800h12M6 2.600v10.800"/></svg>
<div class="a " style="left:573.8px;top:99px;height:20px;line-height:20px;font-size:11.2px;letter-spacing:-0.308px;color:#656f7d;">copy of Tabla</div>
<svg class="ic" style="left:651.9px;top:102.8px" width="12.2" height="12.2" viewBox="0 0 16 16" fill="none" stroke="#7b8491" stroke-width="1.55" stroke-linecap="round" stroke-linejoin="round" ><rect x="2" y="2.400" width="5.400" height="11.200" rx="1.600"/><path d="M7.400 2.400h4.800A1.800 1.800 0 0 1 14 4.200v4.400a1.800 1.800 0 0 1-1.800 1.800H7.400"/></svg>
<div class="a " style="left:667.8px;top:99px;height:20px;line-height:20px;font-size:11.2px;letter-spacing:-0.328px;color:#656f7d;">Tablero</div>
<svg class="ic" style="left:717.9px;top:102.8px" width="12.2" height="12.2" viewBox="0 0 16 16" fill="none" stroke="#7b8491" stroke-width="1.55" stroke-linecap="round" stroke-linejoin="round" ><path d="M2.400 3.600h6M2.400 6.800h9M2.400 10h6M2.400 13.200h11.200"/></svg>
<div class="a " style="left:733.9px;top:99px;height:20px;line-height:20px;font-size:11.2px;letter-spacing:-0.564px;color:#656f7d;">Gantt</div>
<svg class="ic" style="left:774.9px;top:102.8px" width="12.2" height="12.2" viewBox="0 0 16 16" fill="none" stroke="#7b8491" stroke-width="1.55" stroke-linecap="round" stroke-linejoin="round" ><path d="M1.600 8.400h2.600l1.800-4.800 3 8.800 2-5.600.8 1.600h2.600"/></svg>
<div class="a " style="left:791px;top:99px;height:20px;line-height:20px;font-size:11.2px;letter-spacing:-0.091px;color:#656f7d;">Activity</div>
<svg class="ic" style="left:841.9px;top:102.8px" width="12.2" height="12.2" viewBox="0 0 16 16" fill="none" stroke="#7b8491" stroke-width="1.55" stroke-linecap="round" stroke-linejoin="round" ><path d="M2.400 4h8.800M6 8h7.600M4.400 12h5.200"/></svg>
<div class="a " style="left:857.3px;top:99px;height:20px;line-height:20px;font-size:11.2px;letter-spacing:-0.163px;color:#656f7d;">Timeline</div>
<svg class="ic" style="left:912.9px;top:102.8px" width="12.2" height="12.2" viewBox="0 0 16 16" fill="none" stroke="#7b8491" stroke-width="1.55" stroke-linecap="round" stroke-linejoin="round" ><path d="M3.200 12.600A6 6 0 1 1 14 9a6 6 0 0 1-1.200 3.600M8 9l3-3.600"/><path d="M5 12.600h6" /></svg>
<div class="a " style="left:928.7px;top:99px;height:20px;line-height:20px;font-size:11.2px;letter-spacing:-0.147px;color:#656f7d;">Workload</div>
<div class="a " style="left:990.5px;top:103px;width:11px;height:11px;background:#fff;border-radius:2.500px;box-shadow:0 0 1px rgba(0,0,0,.15)"></div>
<svg class="ic" style="left:992.7px;top:104.54px" width="6.6" height="7.92" viewBox="0 0 16 19" fill="none"><defs><linearGradient id="la3" x1="0" x2="1" y1="0" y2="0"><stop offset="0" stop-color="#ff2fa8"/><stop offset=".55" stop-color="#ff5d8a"/><stop offset="1" stop-color="#ffb52e"/></linearGradient><linearGradient id="lb3" x1="0" x2="1" y1="0" y2="0"><stop offset="0" stop-color="#8b3dff"/><stop offset=".5" stop-color="#6f6bff"/><stop offset="1" stop-color="#3fb4ff"/></linearGradient></defs><path d="M1.800 8 8 2.400l6.200 5.600" stroke="url(#la3)" stroke-width="3.100" stroke-linejoin="miter"/><path d="M1.700 12.300c3.400 5 9.200 5 12.600 0" stroke="url(#lb3)" stroke-width="3.100"/></svg>
<div class="a " style="left:1005.6px;top:99px;height:20px;line-height:20px;font-size:11.2px;letter-spacing:-0.463px;color:#656f7d;">Dasboard Barcelona</div>
<svg class="ic" style="left:1115.9px;top:102.8px" width="12.2" height="12.2" viewBox="0 0 16 16" fill="none" stroke="#7b8491" stroke-width="1.55" stroke-linecap="round" stroke-linejoin="round" ><circle cx="8" cy="4" r="2.200"/><circle cx="3.800" cy="12.200" r="1.700"/><circle cx="12.200" cy="12.200" r="1.700"/><path d="M6.900 5.900 4.400 10.600M9.100 5.900l2.500 4.700"/></svg>
<div class="a " style="left:1131.5px;top:99px;height:20px;line-height:20px;font-size:11.2px;letter-spacing:-0.199px;color:#656f7d;">Mapa mental</div>
<svg class="ic" style="left:256px;top:100.500px" width="5" height="5" viewBox="0 0 5 5"><path d="M.8.500h3.400M1.200.500l.4 2.200h1.800l.4-2.200M.6 2.800h3.800M2.500 2.800V5" stroke="#2a2e34" stroke-width=".9" fill="#2a2e34"/></svg>
<div class="a vl" style="left:1209px;top:102px;width:1px;height:13px;"></div>
<svg class="ic" style="left:1221.25px;top:104.05px" width="9.5" height="9.5" viewBox="0 0 16 16" fill="none" stroke="#656f7d" stroke-width="1.5" stroke-linecap="round" stroke-linejoin="round" ><path d="M8 2.800v10.400M2.800 8h10.400"/></svg>
<div class="a " style="left:1235.5px;top:99px;height:20px;line-height:20px;font-size:11.1px;letter-spacing:-0.598px;color:#656f7d;">Vista</div>
<svg class="ic" style="left:1590.5px;top:103px" width="11" height="11" viewBox="0 0 16 16" fill="none" stroke="#656f7d" stroke-width="1.4" stroke-linecap="round" stroke-linejoin="round" ><circle cx="7.200" cy="7.200" r="4.800"/><path d="m10.800 10.800 3 3"/></svg>
<div class="a " style="left:1605.8px;top:98.2px;height:20px;line-height:20px;font-size:10.7px;letter-spacing:-0.581px;color:#656f7d;">Buscar</div>
<div class="a " style="left:1644px;top:98px;width:58px;height:21px;background:#eff0f2;border-radius:5px"></div>
<svg class="ic" style="left:1648.75px;top:103.05px" width="10.5" height="10.5" viewBox="0 0 16 16" fill="none" stroke="#2a2e34" stroke-width="1.3" stroke-linecap="round" stroke-linejoin="round" ><path d="M2 4.400h12M2 8h12M2 11.600h12" stroke-width="1.200"/><path d="M5.200 3v2.800M10.800 6.600v2.800M6.800 10.200v2.800" stroke-width="1.800"/></svg>
<div class="a " style="left:1662.5px;top:98.2px;height:20px;line-height:20px;font-size:11.2px;letter-spacing:-0.256px;color:#2a2e34;">Ocultar</div>
<svg class="ic" style="left:1710.25px;top:102.55px" width="11.5" height="11.5" viewBox="0 0 16 16" fill="none" stroke="#656f7d" stroke-width="1.2" stroke-linecap="round" stroke-linejoin="round" ><circle cx="8" cy="8" r="2.100"/><path d="M6.800 1.800h2.400l.4 1.700 1.200.7 1.700-.5 1.200 2.100-1.300 1.200v1.400l1.300 1.200-1.200 2.100-1.700-.5-1.200.7-.4 1.700H6.800l-.4-1.700-1.200-.7-1.700.5-1.200-2.100 1.300-1.200V7.200L2.300 6l1.200-2.100 1.700.5 1.200-.7z"/></svg>
<div class="a " style="left:1725.2px;top:98.2px;height:20px;line-height:20px;font-size:11.2px;letter-spacing:-0.514px;color:#656f7d;">Personalizar</div>
<div class="a vl" style="left:1791px;top:102px;width:1px;height:13px;"></div>
<div class="a " style="left:1796px;top:99.3px;width:81px;height:17.5px;background:#2a2e34;border-radius:4px"></div>
<div class="a " style="left:1803px;top:98.2px;height:20px;line-height:20px;font-size:9.1px;letter-spacing:-0.487px;font-weight:700;color:#fff;">Añadir Tarea</div>
<svg class="ic" style="left:1864.75px;top:104.65px" width="7.5" height="7.5" viewBox="0 0 16 16" fill="none" stroke="#fff" stroke-width="2" stroke-linecap="round" stroke-linejoin="round" ><path d="m4 6 4 4 4-4"/></svg>
<div class="a " style="left:1885px;top:98.5px;width:19.5px;height:19.5px;background:#eff0f2;border-radius:50%"></div>
<svg class="ic" style="left:1890.45px;top:104.25px" width="8.5" height="8.5" viewBox="0 0 16 16" fill="none" stroke="#4f5762" stroke-width="1.8" stroke-linecap="round" stroke-linejoin="round" ><path d="m4 6 4 4 4-4"/></svg>
<div class="a chip on" style="left:253.2px;top:136.2px;width:83.7px;height:17.8px;"></div>
<svg class="ic" style="left:258.25px;top:138.95px" width="12.5" height="12.5" viewBox="0 0 16 16" fill="none" stroke="#2a2e34" stroke-width="1.45" stroke-linecap="round" stroke-linejoin="round" color="#2a2e34"><path d="M8 1.800 14 4.800 8 7.800 2 4.800z" fill="currentColor"/><path d="m2 8 6 3 6-3M2 11.200l6 3 6-3"/></svg>
<div class="a " style="left:272.7px;top:135.5px;height:20px;line-height:20px;font-size:9.5px;letter-spacing:-0.356px;color:#2a2e34;">Grupo: Estado</div>
<div class="a chip on" style="left:340.2px;top:136.2px;width:127.5px;height:17.8px;"></div>
<svg class="ic" style="left:344.75px;top:138.95px" width="12.5" height="12.5" viewBox="0 0 16 16" fill="none" stroke="#2a2e34" stroke-width="1.45" stroke-linecap="round" stroke-linejoin="round" color="#2a2e34"><circle cx="4" cy="3.600" r="1.600"/><circle cx="12" cy="12" r="1.600"/><path d="M4 5.200V9a3 3 0 0 0 3 3h3.400"/></svg>
<div class="a " style="left:359px;top:135.5px;height:20px;line-height:20px;font-size:9.5px;letter-spacing:-0.191px;color:#2a2e34;">Subtareas: Contraer todo</div>
<div class="a chip" style="left:471.5px;top:136.2px;width:65.2px;height:17.8px;"></div>
<svg class="ic" style="left:476.75px;top:138.95px" width="12.5" height="12.5" viewBox="0 0 16 16" fill="none" stroke="#4f5762" stroke-width="1.45" stroke-linecap="round" stroke-linejoin="round" color="#4f5762"><rect x="2" y="3" width="12" height="10" rx="1.600"/><path d="M6 3v10M10 3v10"/></svg>
<div class="a " style="left:490.3px;top:135.5px;height:20px;line-height:20px;font-size:9.5px;letter-spacing:-0.474px;color:#4f5762;">Columnas</div>
<div class="a vl" style="left:543.5px;top:139px;width:1px;height:12px;"></div>
<div class="a chip" style="left:550.2px;top:136.2px;width:50.1px;height:17.8px;"></div>
<svg class="ic" style="left:555.25px;top:138.95px" width="12.5" height="12.5" viewBox="0 0 16 16" fill="none" stroke="#4f5762" stroke-width="1.45" stroke-linecap="round" stroke-linejoin="round" color="#4f5762"><path d="M2.400 4.400h11.200M4.400 8h7.200M6.400 11.600h3.200"/></svg>
<div class="a " style="left:569.6px;top:135.5px;height:20px;line-height:20px;font-size:9.5px;letter-spacing:-0.268px;color:#4f5762;">Filtros</div>
<div class="a chip" style="left:604.5px;top:136.2px;width:62.2px;height:17.8px;"></div>
<svg class="ic" style="left:609.55px;top:138.95px" width="12.5" height="12.5" viewBox="0 0 16 16" fill="none" stroke="#4f5762" stroke-width="1.45" stroke-linecap="round" stroke-linejoin="round" color="#4f5762"><circle cx="8" cy="5.200" r="2.800"/><path d="M2.800 13.800a5.200 5.200 0 0 1 10.400 0"/></svg>
<div class="a " style="left:623.8px;top:135.5px;height:20px;line-height:20px;font-size:9.5px;letter-spacing:-0.111px;color:#4f5762;">Modo Yo</div>
<div class="a chip" style="left:670.4px;top:136.2px;width:104.1px;height:17.8px;"></div>
<svg class="ic" style="left:674.9px;top:139.1px" width="12.2" height="12.2" viewBox="0 0 16 16" fill="none" stroke="#4f5762" stroke-width="1.45" stroke-linecap="round" stroke-linejoin="round" color="#4f5762"><circle cx="6" cy="5.400" r="2.500"/><path d="M1.600 13.400a4.400 4.400 0 0 1 8.800 0"/><path d="M10.200 3.100a2.500 2.500 0 0 1 0 4.600M12.200 9.800a4.400 4.400 0 0 1 2.400 3.600"/></svg>
<div class="a " style="left:689.3px;top:135.5px;height:20px;line-height:20px;font-size:9.5px;letter-spacing:-0.461px;color:#4f5762;">Personas asignadas</div>
<div class="a chip on" style="left:778.4px;top:136.2px;width:140.4px;height:17.8px;"></div>
<svg class="ic" style="left:782.55px;top:138.95px" width="12.5" height="12.5" viewBox="0 0 16 16" fill="none" stroke="#2a2e34" stroke-width="1.45" stroke-linecap="round" stroke-linejoin="round" color="#2a2e34"><circle cx="8" cy="8" r="6"/><path d="m5.400 8.200 1.800 1.800 3.400-3.800"/></svg>
<div class="a " style="left:797.4px;top:135.5px;height:20px;line-height:20px;font-size:9.5px;letter-spacing:-0.193px;color:#2a2e34;">Mostrar elementos cerrados</div>
<div class="a vl" style="left:928px;top:139px;width:1px;height:12px;"></div>
<div class="a " style="left:937.7px;top:135.5px;height:20px;line-height:20px;font-size:9.5px;letter-spacing:-0.176px;color:#656f7d;">Ocultar</div>
<div class="a " style="left:1753px;top:133px;width:151.5px;height:24px;border:1px solid #e4e6ea;border-radius:5px;background:#fff"></div>
<div class="a " style="left:1763.6px;top:134.8px;height:20px;line-height:20px;font-size:10.6px;letter-spacing:-0.314px;color:#838b97;">Busca en tareas...</div>
<svg class="ic" style="left:258.500px;top:179px" width="6.400" height="3.900" viewBox="0 0 7 4.500"><path d="M0 0h7L3.500 4.500z" fill="#5c6470"/></svg>
<div class="a " style="left:277px;top:172.4px;width:80px;height:17.8px;background:#e8eaed;border-radius:4px"></div>
<svg class="ic" style="left:281.7px;top:176.1px" width="10.2" height="10.2" viewBox="0 0 13 13"><circle cx="6.500" cy="6.500" r="5.500" fill="none" stroke="#87909e" stroke-width="1.250"/><circle cx="6.500" cy="6.500" r="3.500" fill="#87909e"/></svg>
<div class="a " style="left:296.7px;top:171.6px;height:20px;line-height:20px;font-size:9.6px;letter-spacing:-0.923px;color:#4f5762;">NUEVO DEAL</div>
<div class="a " style="left:368.2px;top:171.6px;height:20px;line-height:20px;font-size:8.6px;letter-spacing:-0.774px;color:#656f7d;">15</div>
<svg class="ic" style="left:385.1px;top:175.2px" width="12" height="12" viewBox="0 0 16 16" fill="none" stroke="none" stroke-width="1.4" stroke-linecap="round" stroke-linejoin="round" color="#656f7d"><circle cx="3.400" cy="8" r="1.150" fill="currentColor" stroke="none"/><circle cx="8" cy="8" r="1.150" fill="currentColor" stroke="none"/><circle cx="12.600" cy="8" r="1.150" fill="currentColor" stroke="none"/></svg>
<svg class="ic" style="left:404.3px;top:176.5px" width="9.4" height="9.4" viewBox="0 0 16 16" fill="none" stroke="#656f7d" stroke-width="1.6" stroke-linecap="round" stroke-linejoin="round" ><path d="M8 2.800v10.400M2.800 8h10.400"/></svg>
<div class="a " style="left:419px;top:171.6px;height:20px;line-height:20px;font-size:9.7px;letter-spacing:-0.494px;color:#656f7d;">Añadir Tarea</div>
<div class="a " style="left:280.3px;top:195.8px;height:20px;line-height:20px;font-size:9.4px;letter-spacing:-0.126px;color:#656f7d;">Nombre</div>
<div class="a " style="left:741.3px;top:195.8px;height:20px;line-height:20px;font-size:9.3px;letter-spacing:-0.478px;color:#656f7d;">Persona asignada</div>
<div class="a " style="left:861.3px;top:195.8px;height:20px;line-height:20px;font-size:9.4px;letter-spacing:-0.401px;color:#656f7d;">Temperatura</div>
<div class="a " style="left:981.4px;top:195.8px;height:20px;line-height:20px;font-size:9.4px;letter-spacing:-0.207px;color:#656f7d;">Familia de producto</div>
<div class="a " style="left:1122.3px;top:195.8px;height:20px;line-height:20px;font-size:9.4px;letter-spacing:-0.491px;color:#656f7d;">Género</div>
<div class="a " style="left:1242.4px;top:195.8px;height:20px;line-height:20px;font-size:9px;letter-spacing:-0.451px;color:#656f7d;">Talla</div>
<div class="a " style="left:1362.3px;top:195.8px;height:20px;line-height:20px;font-size:9.4px;letter-spacing:-0.328px;color:#656f7d;">Cliente</div>
<div class="a " style="left:1494.2px;top:195.8px;height:20px;line-height:20px;font-size:9.4px;letter-spacing:-0.445px;color:#656f7d;">JOIN Clientes</div>
<div class="a " style="left:1614.6px;top:195.8px;height:20px;line-height:20px;font-size:9.4px;letter-spacing:-0.234px;color:#656f7d;">Puntuación estraté...</div>
<div class="a " style="left:1738.1px;top:195.8px;height:20px;line-height:20px;font-size:9.4px;letter-spacing:-0.212px;color:#656f7d;">Precio Unitario</div>
<div class="a" style="left:1857.800px;top:195.8px;width:18px;height:20px;line-height:20px;font-size:9.4px;color:#656f7d;letter-spacing:-0.989px;overflow:hidden;-webkit-mask-image:linear-gradient(90deg,#000 25%,transparent 95%)">Unidades</div>
<svg class="ic" style="left:1482px;top:200.2px" width="10" height="10" viewBox="0 0 16 16" fill="none" stroke="#656f7d" stroke-width="1.5" stroke-linecap="round" stroke-linejoin="round" ><path d="M2.400 8.600 8 3M4.600 2.800h3.600v3.600"/><path d="M13.600 7.400 8 13M11.400 13.200H7.800V9.600"/></svg>
<svg class="ic" style="left:1603.25px;top:201.75px" width="7.5" height="7.5" viewBox="0 0 16 16" fill="none" stroke="#656f7d" stroke-width="1.7" stroke-linecap="round" stroke-linejoin="round" ><path d="M3.600 12.400 12.400 3.600M5.600 3.600h6.800v6.800"/></svg>
<div class="a " style="left:1704.9px;top:198px;width:15.2px;height:15.2px;border:1px solid #c9cdd4;border-radius:50%;background:#f4f5f7"></div>
<svg class="ic" style="left:1708.25px;top:201.35px" width="8.5" height="8.5" viewBox="0 0 16 16" fill="none" stroke="#2a2e34" stroke-width="1.6" stroke-linecap="round" stroke-linejoin="round" ><path d="M8 3v10M4 9l4 4 4-4"/></svg>
<svg class="ic" style="left:1878.55px;top:200.25px" width="10.5" height="10.5" viewBox="0 0 16 16" fill="none" stroke="#4f5762" stroke-width="1.3" stroke-linecap="round" stroke-linejoin="round" ><circle cx="8" cy="8" r="6.200"/><path d="M8 5.200v5.600M5.200 8h5.600"/></svg>
<div class="a rb" style="left:277px;top:217px;width:1623px;height:1px;"></div>
<svg class="ic" style="left:297.8px;top:224.7px" width="12.4" height="12.4" viewBox="0 0 13 13"><circle cx="6.500" cy="6.500" r="5.500" fill="none" stroke="#87909e" stroke-width="1.250"/><circle cx="6.500" cy="6.500" r="3.500" fill="#87909e"/></svg>
<div class="a " style="left:319.2px;top:220.2px;height:20px;line-height:20px;font-size:11.2px;letter-spacing:-0.244px;">Bicicleta de carretera para niñas: Lightning Lancer 930 Negro Mate</div>
<svg class="ic" style="left:737.9px;top:220.9px" width="19" height="19" viewBox="0 0 20 20"><defs><clipPath id="ac2"><circle cx="10" cy="10" r="10"/></clipPath><linearGradient id="ag2" x1="0" x2="1" y1="0" y2="0"><stop offset="0" stop-color="#f1f1f1"/><stop offset=".45" stop-color="#c4c4c4"/><stop offset=".7" stop-color="#6a6a6a"/><stop offset="1" stop-color="#454545"/></linearGradient><linearGradient id="ab2" x1="0" x2="1" y1="0" y2="0"><stop offset="0" stop-color="#6e6e6e"/><stop offset=".4" stop-color="#2a2a2a"/><stop offset="1" stop-color="#0a0a0a"/></linearGradient><filter id="af2" x="-10%" y="-10%" width="120%" height="120%"><feGaussianBlur stdDeviation=".6"/></filter></defs><g clip-path="url(#ac2)"><rect width="20" height="20" fill="#c9c9c9"/><g filter="url(#af2)"><ellipse cx="10.200" cy="8.300" rx="5.300" ry="7.400" fill="url(#ag2)"/><path d="M5.300 7.500h3.500v1.200H5.300zM10.700 7.500h3.600v1.200h-3.600z" fill="#303030"/><path d="M9.300 8.500h1.300v3H9.300z" fill="#dcdcdc"/><path d="M4.800 12.600c1.500-.9 3.200.2 5.200-.4 2-.6 3.900-.3 5.200.4l2.600 2.400c-.8 3.400-4.400 5.400-7.800 5.400s-5.600-1.500-6.600-4z" fill="url(#ab2)"/><ellipse cx="9.300" cy="15.300" rx="2" ry="1.800" fill="#b0b0b0"/><ellipse cx="9.800" cy="13.400" rx="1.300" ry=".55" fill="#111"/></g></g></svg>
<div class="a pill" style="left:856px;top:220px;width:113px;background:#04a9f4;letter-spacing:-0.517px;">Frio</div>
<div class="a pill" style="left:975px;top:220px;width:135px;background:#2f80b9;letter-spacing:-0.186px;">Bicicleta de carretera</div>
<div class="a pill" style="left:1116px;top:220px;width:114px;background:#fd7faa;letter-spacing:-0.331px;">Femenino</div>
<div class="a pill" style="left:1236.2px;top:220px;width:113.6px;background:#7c4dff;letter-spacing:0.006px;">Infantil</div>
<div class="a cl" style="top:220px;letter-spacing:-0.589px">Cycle City</div>
<div class="a tag" style="top:223px;width:44.6px;letter-spacing:-0.555px">Cycle City</div>
<svg class="ic" style="left:1610.2px;top:226.5px" width="9.300" height="8.600" viewBox="0 0 12 11"><path d="M6 1.400l1.300 2.900 3.100.400-2.300 2.100.600 3.100L6 8.400l-2.700 1.500.600-3.100-2.300-2.100 3.100-.400z" fill="#fdc935" stroke="#fdc935" stroke-width="1.900" stroke-linejoin="round"/></svg>
<svg class="ic" style="left:1621.6px;top:226.5px" width="9.300" height="8.600" viewBox="0 0 12 11"><path d="M6 1.400l1.300 2.900 3.100.400-2.300 2.100.600 3.100L6 8.400l-2.700 1.500.600-3.100-2.300-2.100 3.100-.400z" fill="#fdc935" stroke="#fdc935" stroke-width="1.900" stroke-linejoin="round"/></svg>
<svg class="ic" style="left:1633px;top:226.5px" width="9.300" height="8.600" viewBox="0 0 12 11"><path d="M6 1.400l1.300 2.900 3.100.400-2.300 2.100.600 3.100L6 8.400l-2.700 1.500.600-3.100-2.300-2.100 3.100-.400z" fill="#fdc935" stroke="#fdc935" stroke-width="1.900" stroke-linejoin="round"/></svg>
<svg class="ic" style="left:1644.4px;top:226.5px" width="9.300" height="8.600" viewBox="0 0 12 11"><path d="M6 1.400l1.300 2.900 3.100.400-2.300 2.100.600 3.100L6 8.400l-2.700 1.500.600-3.100-2.300-2.100 3.100-.400z" fill="#fdc935" stroke="#fdc935" stroke-width="1.900" stroke-linejoin="round"/></svg>
<svg class="ic" style="left:1655.8px;top:226.5px" width="9.300" height="8.600" viewBox="0 0 12 11"><path d="M6 1.400l1.300 2.900 3.100.400-2.300 2.100.600 3.100L6 8.400l-2.700 1.500.600-3.100-2.300-2.100 3.100-.400z" fill="#fdc935" stroke="#fdc935" stroke-width="1.900" stroke-linejoin="round"/></svg>
<div class="a " style="left:1738.3px;top:220.6px;height:20px;line-height:20px;font-size:10.9px;letter-spacing:-0.591px;">€1,175</div>
<div class="a " style="left:1858.4px;top:220.6px;height:20px;line-height:20px;font-size:11.2px;letter-spacing:0.000px;">8</div>
<div class="a rb" style="left:277px;top:243px;width:1625px;height:1px;opacity:0.75"></div>
<div class="a rb" style="left:277px;top:244px;width:1625px;height:1px;opacity:0.25"></div>
<svg class="ic" style="left:297.8px;top:250.7px" width="12.4" height="12.4" viewBox="0 0 13 13"><circle cx="6.500" cy="6.500" r="5.500" fill="none" stroke="#87909e" stroke-width="1.250"/><circle cx="6.500" cy="6.500" r="3.500" fill="#87909e"/></svg>
<div class="a " style="left:319.2px;top:246.2px;height:20px;line-height:20px;font-size:11.2px;letter-spacing:-0.313px;">Bicicleta de carretera para niñas: Silver Speedster 940 Plata Metálica</div>
<svg class="ic" style="left:737.9px;top:246.9px" width="19" height="19" viewBox="0 0 20 20"><defs><clipPath id="ac3"><circle cx="10" cy="10" r="10"/></clipPath><linearGradient id="ag3" x1="0" x2="1" y1="0" y2="0"><stop offset="0" stop-color="#f1f1f1"/><stop offset=".45" stop-color="#c4c4c4"/><stop offset=".7" stop-color="#6a6a6a"/><stop offset="1" stop-color="#454545"/></linearGradient><linearGradient id="ab3" x1="0" x2="1" y1="0" y2="0"><stop offset="0" stop-color="#6e6e6e"/><stop offset=".4" stop-color="#2a2a2a"/><stop offset="1" stop-color="#0a0a0a"/></linearGradient><filter id="af3" x="-10%" y="-10%" width="120%" height="120%"><feGaussianBlur stdDeviation=".6"/></filter></defs><g clip-path="url(#ac3)"><rect width="20" height="20" fill="#c9c9c9"/><g filter="url(#af3)"><ellipse cx="10.200" cy="8.300" rx="5.300" ry="7.400" fill="url(#ag3)"/><path d="M5.300 7.500h3.500v1.200H5.300zM10.700 7.500h3.600v1.200h-3.600z" fill="#303030"/><path d="M9.300 8.500h1.300v3H9.300z" fill="#dcdcdc"/><path d="M4.800 12.600c1.500-.9 3.200.2 5.200-.4 2-.6 3.900-.3 5.200.4l2.600 2.400c-.8 3.400-4.400 5.400-7.800 5.400s-5.600-1.500-6.600-4z" fill="url(#ab3)"/><ellipse cx="9.300" cy="15.300" rx="2" ry="1.800" fill="#b0b0b0"/><ellipse cx="9.800" cy="13.400" rx="1.300" ry=".55" fill="#111"/></g></g></svg>
<div class="a pill" style="left:856px;top:246px;width:113px;background:#04a9f4;letter-spacing:-0.517px;">Frio</div>
<div class="a pill" style="left:975px;top:246px;width:135px;background:#2f80b9;letter-spacing:-0.186px;">Bicicleta de carretera</div>
<div class="a pill" style="left:1116px;top:246px;width:114px;background:#fd7faa;letter-spacing:-0.331px;">Femenino</div>
<div class="a pill" style="left:1236.2px;top:246px;width:113.6px;background:#7c4dff;letter-spacing:0.006px;">Infantil</div>
<div class="a cl" style="top:246px;letter-spacing:-0.589px">Cycle City</div>
<div class="a tag" style="top:249px;width:44.6px;letter-spacing:-0.555px">Cycle City</div>
<svg class="ic" style="left:1610.2px;top:252.5px" width="9.300" height="8.600" viewBox="0 0 12 11"><path d="M6 1.400l1.300 2.900 3.100.400-2.300 2.100.600 3.100L6 8.400l-2.700 1.500.600-3.100-2.300-2.100 3.100-.400z" fill="#fdc935" stroke="#fdc935" stroke-width="1.900" stroke-linejoin="round"/></svg>
<svg class="ic" style="left:1621.6px;top:252.5px" width="9.300" height="8.600" viewBox="0 0 12 11"><path d="M6 1.400l1.300 2.900 3.100.400-2.300 2.100.600 3.100L6 8.400l-2.700 1.500.600-3.100-2.300-2.100 3.100-.400z" fill="#fdc935" stroke="#fdc935" stroke-width="1.900" stroke-linejoin="round"/></svg>
<svg class="ic" style="left:1633px;top:252.5px" width="9.300" height="8.600" viewBox="0 0 12 11"><path d="M6 1.400l1.300 2.900 3.100.400-2.300 2.100.600 3.100L6 8.400l-2.700 1.500.600-3.100-2.300-2.100 3.100-.400z" fill="#fdc935" stroke="#fdc935" stroke-width="1.900" stroke-linejoin="round"/></svg>
<svg class="ic" style="left:1644.4px;top:252.5px" width="9.300" height="8.600" viewBox="0 0 12 11"><path d="M6 1.400l1.300 2.900 3.100.400-2.300 2.100.600 3.100L6 8.400l-2.700 1.500.600-3.100-2.300-2.100 3.100-.400z" fill="#fdc935" stroke="#fdc935" stroke-width="1.900" stroke-linejoin="round"/></svg>
<svg class="ic" style="left:1655.8px;top:252.5px" width="9.300" height="8.600" viewBox="0 0 12 11"><path d="M6 1.400l1.300 2.900 3.100.400-2.300 2.100.600 3.100L6 8.400l-2.700 1.500.600-3.100-2.300-2.100 3.100-.400z" fill="#fdc935" stroke="#fdc935" stroke-width="1.900" stroke-linejoin="round"/></svg>
<div class="a " style="left:1738.3px;top:246.6px;height:20px;line-height:20px;font-size:10.9px;letter-spacing:-0.591px;">€1,175</div>
<div class="a " style="left:1858.4px;top:246.6px;height:20px;line-height:20px;font-size:11.2px;letter-spacing:0.000px;">8</div>
<div class="a rb" style="left:277px;top:269px;width:1625px;height:1px;opacity:0.50"></div>
<div class="a rb" style="left:277px;top:270px;width:1625px;height:1px;opacity:0.50"></div>
<svg class="ic" style="left:297.8px;top:276.7px" width="12.4" height="12.4" viewBox="0 0 13 13"><circle cx="6.500" cy="6.500" r="5.500" fill="none" stroke="#87909e" stroke-width="1.250"/><circle cx="6.500" cy="6.500" r="3.500" fill="#87909e"/></svg>
<div class="a " style="left:319.2px;top:272.2px;height:20px;line-height:20px;font-size:11.2px;letter-spacing:-0.395px;">Bicicleta de carretera para niñas: Emerald Enigma 910 Verde Esmeralda</div>
<svg class="ic" style="left:737.9px;top:272.9px" width="19" height="19" viewBox="0 0 20 20"><defs><clipPath id="ac4"><circle cx="10" cy="10" r="10"/></clipPath><linearGradient id="ag4" x1="0" x2="1" y1="0" y2="0"><stop offset="0" stop-color="#f1f1f1"/><stop offset=".45" stop-color="#c4c4c4"/><stop offset=".7" stop-color="#6a6a6a"/><stop offset="1" stop-color="#454545"/></linearGradient><linearGradient id="ab4" x1="0" x2="1" y1="0" y2="0"><stop offset="0" stop-color="#6e6e6e"/><stop offset=".4" stop-color="#2a2a2a"/><stop offset="1" stop-color="#0a0a0a"/></linearGradient><filter id="af4" x="-10%" y="-10%" width="120%" height="120%"><feGaussianBlur stdDeviation=".6"/></filter></defs><g clip-path="url(#ac4)"><rect width="20" height="20" fill="#c9c9c9"/><g filter="url(#af4)"><ellipse cx="10.200" cy="8.300" rx="5.300" ry="7.400" fill="url(#ag4)"/><path d="M5.300 7.500h3.500v1.200H5.300zM10.700 7.500h3.600v1.200h-3.600z" fill="#303030"/><path d="M9.300 8.500h1.300v3H9.300z" fill="#dcdcdc"/><path d="M4.800 12.600c1.500-.9 3.200.2 5.200-.4 2-.6 3.900-.3 5.200.4l2.600 2.400c-.8 3.400-4.400 5.400-7.800 5.400s-5.600-1.500-6.600-4z" fill="url(#ab4)"/><ellipse cx="9.300" cy="15.300" rx="2" ry="1.800" fill="#b0b0b0"/><ellipse cx="9.800" cy="13.400" rx="1.300" ry=".55" fill="#111"/></g></g></svg>
<div class="a pill" style="left:856px;top:272px;width:113px;background:#04a9f4;letter-spacing:-0.517px;">Frio</div>
<div class="a pill" style="left:975px;top:272px;width:135px;background:#2f80b9;letter-spacing:-0.186px;">Bicicleta de carretera</div>
<div class="a pill" style="left:1116px;top:272px;width:114px;background:#fd7faa;letter-spacing:-0.331px;">Femenino</div>
<div class="a pill" style="left:1236.2px;top:272px;width:113.6px;background:#7c4dff;letter-spacing:0.006px;">Infantil</div>
<div class="a cl" style="top:272px;letter-spacing:-0.589px">Cycle City</div>
<div class="a tag" style="top:275px;width:44.6px;letter-spacing:-0.555px">Cycle City</div>
<svg class="ic" style="left:1610.2px;top:278.5px" width="9.300" height="8.600" viewBox="0 0 12 11"><path d="M6 1.400l1.300 2.900 3.100.400-2.300 2.100.600 3.100L6 8.400l-2.700 1.500.600-3.100-2.300-2.100 3.100-.400z" fill="#fdc935" stroke="#fdc935" stroke-width="1.900" stroke-linejoin="round"/></svg>
<svg class="ic" style="left:1621.6px;top:278.5px" width="9.300" height="8.600" viewBox="0 0 12 11"><path d="M6 1.400l1.300 2.900 3.100.400-2.300 2.100.600 3.100L6 8.400l-2.700 1.500.600-3.100-2.300-2.100 3.100-.400z" fill="#fdc935" stroke="#fdc935" stroke-width="1.900" stroke-linejoin="round"/></svg>
<svg class="ic" style="left:1633px;top:278.5px" width="9.300" height="8.600" viewBox="0 0 12 11"><path d="M6 1.400l1.300 2.900 3.100.400-2.300 2.100.600 3.100L6 8.400l-2.700 1.500.600-3.100-2.300-2.100 3.100-.400z" fill="#fdc935" stroke="#fdc935" stroke-width="1.900" stroke-linejoin="round"/></svg>
<svg class="ic" style="left:1644.4px;top:278.5px" width="9.300" height="8.600" viewBox="0 0 12 11"><path d="M6 1.400l1.300 2.900 3.100.400-2.300 2.100.600 3.100L6 8.400l-2.700 1.500.600-3.100-2.300-2.100 3.100-.400z" fill="#fdc935" stroke="#fdc935" stroke-width="1.900" stroke-linejoin="round"/></svg>
<svg class="ic" style="left:1655.8px;top:278.5px" width="9.300" height="8.600" viewBox="0 0 12 11"><path d="M6 1.400l1.300 2.900 3.100.400-2.300 2.100.600 3.100L6 8.400l-2.700 1.500.600-3.100-2.300-2.100 3.100-.400z" fill="#fdc935" stroke="#fdc935" stroke-width="1.900" stroke-linejoin="round"/></svg>
<div class="a " style="left:1738.3px;top:272.6px;height:20px;line-height:20px;font-size:10.9px;letter-spacing:-0.591px;">€1,175</div>
<div class="a " style="left:1858.4px;top:272.6px;height:20px;line-height:20px;font-size:11.2px;letter-spacing:0.000px;">2</div>
<div class="a rb" style="left:277px;top:295px;width:1625px;height:1px;opacity:0.25"></div>
<div class="a rb" style="left:277px;top:296px;width:1625px;height:1px;opacity:0.75"></div>
<svg class="ic" style="left:297.8px;top:303.7px" width="12.4" height="12.4" viewBox="0 0 13 13"><circle cx="6.500" cy="6.500" r="5.500" fill="none" stroke="#87909e" stroke-width="1.250"/><circle cx="6.500" cy="6.500" r="3.500" fill="#87909e"/></svg>
<div class="a " style="left:319.2px;top:299.2px;height:20px;line-height:20px;font-size:11.2px;letter-spacing:-0.382px;">Bicicleta de crucero para niñas: Ruby Racer 890 Rojo Rubí</div>
<svg class="ic" style="left:737.9px;top:299.9px" width="19" height="19" viewBox="0 0 20 20"><defs><clipPath id="ac5"><circle cx="10" cy="10" r="10"/></clipPath><linearGradient id="ag5" x1="0" x2="1" y1="0" y2="0"><stop offset="0" stop-color="#f1f1f1"/><stop offset=".45" stop-color="#c4c4c4"/><stop offset=".7" stop-color="#6a6a6a"/><stop offset="1" stop-color="#454545"/></linearGradient><linearGradient id="ab5" x1="0" x2="1" y1="0" y2="0"><stop offset="0" stop-color="#6e6e6e"/><stop offset=".4" stop-color="#2a2a2a"/><stop offset="1" stop-color="#0a0a0a"/></linearGradient><filter id="af5" x="-10%" y="-10%" width="120%" height="120%"><feGaussianBlur stdDeviation=".6"/></filter></defs><g clip-path="url(#ac5)"><rect width="20" height="20" fill="#c9c9c9"/><g filter="url(#af5)"><ellipse cx="10.200" cy="8.300" rx="5.300" ry="7.400" fill="url(#ag5)"/><path d="M5.300 7.500h3.500v1.200H5.300zM10.700 7.500h3.600v1.200h-3.600z" fill="#303030"/><path d="M9.300 8.500h1.300v3H9.300z" fill="#dcdcdc"/><path d="M4.800 12.600c1.500-.9 3.200.2 5.200-.4 2-.6 3.900-.3 5.200.4l2.600 2.400c-.8 3.400-4.400 5.400-7.800 5.400s-5.600-1.500-6.600-4z" fill="url(#ab5)"/><ellipse cx="9.300" cy="15.300" rx="2" ry="1.800" fill="#b0b0b0"/><ellipse cx="9.800" cy="13.400" rx="1.300" ry=".55" fill="#111"/></g></g></svg>
<div class="a pill" style="left:856px;top:299px;width:113px;background:#04a9f4;letter-spacing:-0.517px;">Frio</div>
<div class="a pill" style="left:975px;top:299px;width:135px;background:#2ecd6f;letter-spacing:-0.241px;">Bicicleta de paseo</div>
<div class="a pill" style="left:1116px;top:299px;width:114px;background:#fd7faa;letter-spacing:-0.331px;">Femenino</div>
<div class="a pill" style="left:1236.2px;top:299px;width:113.6px;background:#7c4dff;letter-spacing:0.006px;">Infantil</div>
<div class="a cl" style="top:299px;letter-spacing:-0.589px">Cycle City</div>
<div class="a tag" style="top:302px;width:44.6px;letter-spacing:-0.555px">Cycle City</div>
<svg class="ic" style="left:1610.2px;top:305.5px" width="9.300" height="8.600" viewBox="0 0 12 11"><path d="M6 1.400l1.300 2.900 3.100.400-2.300 2.100.600 3.100L6 8.400l-2.700 1.500.600-3.100-2.300-2.100 3.100-.400z" fill="#fdc935" stroke="#fdc935" stroke-width="1.900" stroke-linejoin="round"/></svg>
<svg class="ic" style="left:1621.6px;top:305.5px" width="9.300" height="8.600" viewBox="0 0 12 11"><path d="M6 1.400l1.300 2.900 3.100.400-2.300 2.100.600 3.100L6 8.400l-2.700 1.500.600-3.100-2.300-2.100 3.100-.400z" fill="#fdc935" stroke="#fdc935" stroke-width="1.900" stroke-linejoin="round"/></svg>
<svg class="ic" style="left:1633px;top:305.5px" width="9.300" height="8.600" viewBox="0 0 12 11"><path d="M6 1.400l1.300 2.900 3.100.400-2.300 2.100.600 3.100L6 8.400l-2.700 1.500.600-3.100-2.300-2.100 3.100-.400z" fill="#fdc935" stroke="#fdc935" stroke-width="1.900" stroke-linejoin="round"/></svg>
<svg class="ic" style="left:1644.4px;top:305.5px" width="9.300" height="8.600" viewBox="0 0 12 11"><path d="M6 1.400l1.300 2.900 3.100.400-2.300 2.100.600 3.100L6 8.400l-2.700 1.500.600-3.100-2.300-2.100 3.100-.400z" fill="#fdc935" stroke="#fdc935" stroke-width="1.900" stroke-linejoin="round"/></svg>
<svg class="ic" style="left:1655.8px;top:305.5px" width="9.300" height="8.600" viewBox="0 0 12 11"><path d="M6 1.400l1.300 2.900 3.100.400-2.300 2.100.600 3.100L6 8.400l-2.700 1.500.600-3.100-2.300-2.100 3.100-.400z" fill="#fdc935" stroke="#fdc935" stroke-width="1.900" stroke-linejoin="round"/></svg>
<div class="a " style="left:1738.3px;top:299.6px;height:20px;line-height:20px;font-size:11.1px;letter-spacing:-0.603px;">€180</div>
<div class="a " style="left:1858.4px;top:299.6px;height:20px;line-height:20px;font-size:11.2px;letter-spacing:0.000px;">8</div>
<div class="a rb" style="left:277px;top:322px;width:1625px;height:1px;"></div>
<svg class="ic" style="left:297.8px;top:329.7px" width="12.4" height="12.4" viewBox="0 0 13 13"><circle cx="6.500" cy="6.500" r="5.500" fill="none" stroke="#87909e" stroke-width="1.250"/><circle cx="6.500" cy="6.500" r="3.500" fill="#87909e"/></svg>
<div class="a " style="left:319.2px;top:325.2px;height:20px;line-height:20px;font-size:11.2px;letter-spacing:-0.349px;">Bicicleta de crucero para niñas: Forest Fern 820 Verde Bosque</div>
<div class="a av" style="left:737.9px;top:325.9px;width:19px;height:19px;">A</div>
<div class="a pill" style="left:856px;top:325px;width:113px;background:#04a9f4;letter-spacing:-0.517px;">Frio</div>
<div class="a pill" style="left:975px;top:325px;width:135px;background:#2ecd6f;letter-spacing:-0.241px;">Bicicleta de paseo</div>
<div class="a pill" style="left:1116px;top:325px;width:114px;background:#fd7faa;letter-spacing:-0.331px;">Femenino</div>
<div class="a pill" style="left:1236.2px;top:325px;width:113.6px;background:#7c4dff;letter-spacing:0.006px;">Infantil</div>
<div class="a cl" style="top:325px;letter-spacing:-0.553px">Spoke Haven</div>
<div class="a tag" style="top:328px;width:56.9px;letter-spacing:-0.542px">Spoke Haven</div>
<svg class="ic" style="left:1610.2px;top:331.5px" width="9.300" height="8.600" viewBox="0 0 12 11"><path d="M6 1.400l1.300 2.900 3.100.400-2.300 2.100.600 3.100L6 8.400l-2.700 1.500.600-3.100-2.300-2.100 3.100-.400z" fill="#fdc935" stroke="#fdc935" stroke-width="1.900" stroke-linejoin="round"/></svg>
<svg class="ic" style="left:1621.6px;top:331.5px" width="9.300" height="8.600" viewBox="0 0 12 11"><path d="M6 1.400l1.300 2.900 3.100.400-2.300 2.100.600 3.100L6 8.400l-2.700 1.500.600-3.100-2.300-2.100 3.100-.400z" fill="#fdc935" stroke="#fdc935" stroke-width="1.900" stroke-linejoin="round"/></svg>
<svg class="ic" style="left:1633px;top:331.5px" width="9.300" height="8.600" viewBox="0 0 12 11"><path d="M6 1.400l1.300 2.900 3.100.400-2.300 2.100.600 3.100L6 8.400l-2.700 1.500.600-3.100-2.300-2.100 3.100-.400z" fill="#fdc935" stroke="#fdc935" stroke-width="1.900" stroke-linejoin="round"/></svg>
<div class="a " style="left:1738.3px;top:325.6px;height:20px;line-height:20px;font-size:10.7px;letter-spacing:-0.577px;">€555</div>
<div class="a " style="left:1858.4px;top:325.6px;height:20px;line-height:20px;font-size:11.2px;letter-spacing:0.000px;">9</div>
<div class="a rb" style="left:277px;top:348px;width:1625px;height:1px;opacity:0.75"></div>
<div class="a rb" style="left:277px;top:349px;width:1625px;height:1px;opacity:0.25"></div>
<svg class="ic" style="left:297.8px;top:355.7px" width="12.4" height="12.4" viewBox="0 0 13 13"><circle cx="6.500" cy="6.500" r="5.500" fill="none" stroke="#87909e" stroke-width="1.250"/><circle cx="6.500" cy="6.500" r="3.500" fill="#87909e"/></svg>
<div class="a " style="left:319.2px;top:351.2px;height:20px;line-height:20px;font-size:11.2px;letter-spacing:-0.319px;">Bicicleta de montaña para niñas: Forest Explorer 270 Verde Bosque</div>
<svg class="ic" style="left:737.9px;top:351.9px" width="19" height="19" viewBox="0 0 20 20"><defs><clipPath id="ac6"><circle cx="10" cy="10" r="10"/></clipPath><linearGradient id="ag6" x1="0" x2="1" y1="0" y2="0"><stop offset="0" stop-color="#f1f1f1"/><stop offset=".45" stop-color="#c4c4c4"/><stop offset=".7" stop-color="#6a6a6a"/><stop offset="1" stop-color="#454545"/></linearGradient><linearGradient id="ab6" x1="0" x2="1" y1="0" y2="0"><stop offset="0" stop-color="#6e6e6e"/><stop offset=".4" stop-color="#2a2a2a"/><stop offset="1" stop-color="#0a0a0a"/></linearGradient><filter id="af6" x="-10%" y="-10%" width="120%" height="120%"><feGaussianBlur stdDeviation=".6"/></filter></defs><g clip-path="url(#ac6)"><rect width="20" height="20" fill="#c9c9c9"/><g filter="url(#af6)"><ellipse cx="10.200" cy="8.300" rx="5.300" ry="7.400" fill="url(#ag6)"/><path d="M5.300 7.500h3.500v1.200H5.300zM10.700 7.500h3.600v1.200h-3.600z" fill="#303030"/><path d="M9.300 8.500h1.300v3H9.300z" fill="#dcdcdc"/><path d="M4.800 12.600c1.500-.9 3.200.2 5.200-.4 2-.6 3.900-.3 5.200.4l2.600 2.400c-.8 3.400-4.400 5.400-7.800 5.400s-5.600-1.500-6.600-4z" fill="url(#ab6)"/><ellipse cx="9.300" cy="15.300" rx="2" ry="1.800" fill="#b0b0b0"/><ellipse cx="9.800" cy="13.400" rx="1.300" ry=".55" fill="#111"/></g></g></svg>
<div class="a pill" style="left:856px;top:351px;width:113px;background:#e50000;letter-spacing:-0.045px;">Ardiendo</div>
<div class="a pill" style="left:975px;top:351px;width:135px;background:#e50000;letter-spacing:-0.129px;">Bicicleta de montaña</div>
<div class="a pill" style="left:1116px;top:351px;width:114px;background:#fd7faa;letter-spacing:-0.331px;">Femenino</div>
<div class="a pill" style="left:1236.2px;top:351px;width:113.6px;background:#7c4dff;letter-spacing:0.006px;">Infantil</div>
<div class="a cl" style="top:351px;letter-spacing:-0.554px">Summit Cycles</div>
<div class="a tag" style="top:354px;width:62.1px;letter-spacing:-0.546px">Summit Cycles</div>
<svg class="ic" style="left:1610.2px;top:357.5px" width="9.300" height="8.600" viewBox="0 0 12 11"><path d="M6 1.400l1.300 2.900 3.100.400-2.300 2.100.600 3.100L6 8.400l-2.700 1.500.600-3.100-2.300-2.100 3.100-.400z" fill="#fdc935" stroke="#fdc935" stroke-width="1.900" stroke-linejoin="round"/></svg>
<svg class="ic" style="left:1621.6px;top:357.5px" width="9.300" height="8.600" viewBox="0 0 12 11"><path d="M6 1.400l1.300 2.900 3.100.400-2.300 2.100.600 3.100L6 8.400l-2.700 1.500.600-3.100-2.300-2.100 3.100-.400z" fill="#fdc935" stroke="#fdc935" stroke-width="1.900" stroke-linejoin="round"/></svg>
<div class="a " style="left:1738.3px;top:351.6px;height:20px;line-height:20px;font-size:11.1px;letter-spacing:-0.603px;">€100</div>
<div class="a " style="left:1858.4px;top:351.6px;height:20px;line-height:20px;font-size:11px;letter-spacing:-1.318px;">70</div>
<div class="a rb" style="left:277px;top:374px;width:1625px;height:1px;opacity:0.50"></div>
<div class="a rb" style="left:277px;top:375px;width:1625px;height:1px;opacity:0.50"></div>
<svg class="ic" style="left:297.8px;top:381.7px" width="12.4" height="12.4" viewBox="0 0 13 13"><circle cx="6.500" cy="6.500" r="5.500" fill="none" stroke="#87909e" stroke-width="1.250"/><circle cx="6.500" cy="6.500" r="3.500" fill="#87909e"/></svg>
<div class="a " style="left:319.2px;top:377.2px;height:20px;line-height:20px;font-size:11.2px;letter-spacing:-0.295px;">Bicicleta de montaña para mujer: Pink Paradise 440 Rosa Brillante</div>
<svg class="ic" style="left:283px;top:384.2px" width="5" height="7" viewBox="0 0 5 7"><path d="M.5.500 4.500 3.500.5 6.500z" fill="#4f5762"/></svg>
<svg class="ic" style="left:636.75px;top:383.95px" width="8.5" height="8.5" viewBox="0 0 16 16" fill="none" stroke="#656f7d" stroke-width="1.5" stroke-linecap="round" stroke-linejoin="round" ><circle cx="4" cy="3.600" r="1.600"/><circle cx="12" cy="12" r="1.600"/><path d="M4 5.200V9a3 3 0 0 0 3 3h3.400"/></svg>
<div class="a " style="left:648.3px;top:378px;height:20px;line-height:20px;font-size:9.6px;letter-spacing:0.000px;color:#656f7d;">2</div>
<div class="a av" style="left:737.9px;top:377.9px;width:19px;height:19px;">J</div>
<div class="a pill" style="left:856px;top:377px;width:113px;background:#04a9f4;letter-spacing:-0.517px;">Frio</div>
<div class="a pill" style="left:975px;top:377px;width:135px;background:#e50000;letter-spacing:-0.129px;">Bicicleta de montaña</div>
<div class="a pill" style="left:1116px;top:377px;width:114px;background:#fd7faa;letter-spacing:-0.331px;">Femenino</div>
<div class="a pill" style="left:1236.2px;top:377px;width:113.6px;background:#ff7800;letter-spacing:0.111px;">Adulto</div>
<div class="a cl" style="top:377px;letter-spacing:-0.671px">Pedal Power</div>
<div class="a tag" style="top:380px;width:53.4px;letter-spacing:-0.595px">Pedal Power</div>
<svg class="ic" style="left:1610.2px;top:383.5px" width="9.300" height="8.600" viewBox="0 0 12 11"><path d="M6 1.400l1.300 2.900 3.100.400-2.300 2.100.600 3.100L6 8.400l-2.700 1.500.600-3.100-2.300-2.100 3.100-.400z" fill="#fdc935" stroke="#fdc935" stroke-width="1.900" stroke-linejoin="round"/></svg>
<div class="a " style="left:1738.3px;top:377.6px;height:20px;line-height:20px;font-size:11.1px;letter-spacing:-0.603px;">€350</div>
<div class="a " style="left:1858.4px;top:377.6px;height:20px;line-height:20px;font-size:11.2px;letter-spacing:0.000px;">5</div>
<div class="a rb" style="left:277px;top:400px;width:1625px;height:1px;opacity:0.25"></div>
<div class="a rb" style="left:277px;top:401px;width:1625px;height:1px;opacity:0.75"></div>
<svg class="ic" style="left:297.8px;top:408.7px" width="12.4" height="12.4" viewBox="0 0 13 13"><circle cx="6.500" cy="6.500" r="5.500" fill="none" stroke="#87909e" stroke-width="1.250"/><circle cx="6.500" cy="6.500" r="3.500" fill="#87909e"/></svg>
<div class="a " style="left:319.2px;top:404.2px;height:20px;line-height:20px;font-size:11.2px;letter-spacing:-0.277px;">Bicicleta de montaña para niñas: Tiny Trekker 230 Negro Carbón</div>
<div class="a av" style="left:737.9px;top:404.9px;width:19px;height:19px;">P</div>
<div class="a pill" style="left:856px;top:404px;width:113px;background:#04a9f4;letter-spacing:-0.517px;">Frio</div>
<div class="a pill" style="left:975px;top:404px;width:135px;background:#e50000;letter-spacing:-0.129px;">Bicicleta de montaña</div>
<div class="a pill" style="left:1116px;top:404px;width:114px;background:#fd7faa;letter-spacing:-0.331px;">Femenino</div>
<div class="a pill" style="left:1236.2px;top:404px;width:113.6px;background:#7c4dff;letter-spacing:0.006px;">Infantil</div>
<div class="a cl" style="top:404px;letter-spacing:-0.637px">Pedal Paradise</div>
<div class="a tag" style="top:407px;width:61px;letter-spacing:-0.628px">Pedal Paradise</div>
<svg class="ic" style="left:1610.2px;top:410.5px" width="9.300" height="8.600" viewBox="0 0 12 11"><path d="M6 1.400l1.300 2.900 3.100.400-2.300 2.100.600 3.100L6 8.400l-2.700 1.500.600-3.100-2.300-2.100 3.100-.400z" fill="#fdc935" stroke="#fdc935" stroke-width="1.900" stroke-linejoin="round"/></svg>
<div class="a " style="left:1738.3px;top:404.6px;height:20px;line-height:20px;font-size:11.1px;letter-spacing:-0.603px;">€180</div>
<div class="a " style="left:1858.4px;top:404.6px;height:20px;line-height:20px;font-size:11.2px;letter-spacing:0.000px;">4</div>
<div class="a rb" style="left:277px;top:427px;width:1625px;height:1px;"></div>
<svg class="ic" style="left:297.8px;top:434.7px" width="12.4" height="12.4" viewBox="0 0 13 13"><circle cx="6.500" cy="6.500" r="5.500" fill="none" stroke="#87909e" stroke-width="1.250"/><circle cx="6.500" cy="6.500" r="3.500" fill="#87909e"/></svg>
<div class="a " style="left:319.2px;top:430.2px;height:20px;line-height:20px;font-size:11.2px;letter-spacing:-0.315px;">Bicicleta de montaña para niñas: Little Rider 200 Rosa Pastel</div>
<div class="a av" style="left:737.9px;top:430.9px;width:19px;height:19px;">A</div>
<div class="a pill" style="left:856px;top:430px;width:113px;background:#04a9f4;letter-spacing:-0.517px;">Frio</div>
<div class="a pill" style="left:975px;top:430px;width:135px;background:#e50000;letter-spacing:-0.129px;">Bicicleta de montaña</div>
<div class="a pill" style="left:1116px;top:430px;width:114px;background:#fd7faa;letter-spacing:-0.331px;">Femenino</div>
<div class="a pill" style="left:1236.2px;top:430px;width:113.6px;background:#7c4dff;letter-spacing:0.006px;">Infantil</div>
<div class="a cl" style="top:430px;letter-spacing:-0.612px">Speedy Wheels</div>
<div class="a tag" style="top:433px;width:64.4px;letter-spacing:-0.601px">Speedy Wheels</div>
<svg class="ic" style="left:1610.2px;top:436.5px" width="9.300" height="8.600" viewBox="0 0 12 11"><path d="M6 1.400l1.300 2.900 3.100.400-2.300 2.100.600 3.100L6 8.400l-2.700 1.500.600-3.100-2.300-2.100 3.100-.400z" fill="#fdc935" stroke="#fdc935" stroke-width="1.900" stroke-linejoin="round"/></svg>
<div class="a " style="left:1738.3px;top:430.6px;height:20px;line-height:20px;font-size:11.1px;letter-spacing:-0.603px;">€180</div>
<div class="a " style="left:1858.4px;top:430.6px;height:20px;line-height:20px;font-size:11.2px;letter-spacing:0.000px;">7</div>
<div class="a rb" style="left:277px;top:453px;width:1625px;height:1px;opacity:0.75"></div>
<div class="a rb" style="left:277px;top:454px;width:1625px;height:1px;opacity:0.25"></div>
<svg class="ic" style="left:297.8px;top:460.7px" width="12.4" height="12.4" viewBox="0 0 13 13"><circle cx="6.500" cy="6.500" r="5.500" fill="none" stroke="#87909e" stroke-width="1.250"/><circle cx="6.500" cy="6.500" r="3.500" fill="#87909e"/></svg>
<div class="a " style="left:319.2px;top:456.2px;height:20px;line-height:20px;font-size:11.2px;letter-spacing:-0.312px;">Bicicleta de carretera para niñas: Fireball Flash 960 Rojo Intenso</div>
<svg class="ic" style="left:737.9px;top:456.9px" width="19" height="19" viewBox="0 0 20 20"><defs><clipPath id="ac7"><circle cx="10" cy="10" r="10"/></clipPath><linearGradient id="ag7" x1="0" x2="1" y1="0" y2="0"><stop offset="0" stop-color="#f1f1f1"/><stop offset=".45" stop-color="#c4c4c4"/><stop offset=".7" stop-color="#6a6a6a"/><stop offset="1" stop-color="#454545"/></linearGradient><linearGradient id="ab7" x1="0" x2="1" y1="0" y2="0"><stop offset="0" stop-color="#6e6e6e"/><stop offset=".4" stop-color="#2a2a2a"/><stop offset="1" stop-color="#0a0a0a"/></linearGradient><filter id="af7" x="-10%" y="-10%" width="120%" height="120%"><feGaussianBlur stdDeviation=".6"/></filter></defs><g clip-path="url(#ac7)"><rect width="20" height="20" fill="#c9c9c9"/><g filter="url(#af7)"><ellipse cx="10.200" cy="8.300" rx="5.300" ry="7.400" fill="url(#ag7)"/><path d="M5.300 7.500h3.500v1.200H5.300zM10.700 7.500h3.600v1.200h-3.600z" fill="#303030"/><path d="M9.300 8.500h1.300v3H9.300z" fill="#dcdcdc"/><path d="M4.800 12.600c1.500-.9 3.200.2 5.200-.4 2-.6 3.900-.3 5.200.4l2.600 2.400c-.8 3.400-4.400 5.400-7.800 5.400s-5.600-1.500-6.600-4z" fill="url(#ab7)"/><ellipse cx="9.300" cy="15.300" rx="2" ry="1.800" fill="#b0b0b0"/><ellipse cx="9.800" cy="13.400" rx="1.300" ry=".55" fill="#111"/></g></g></svg>
<div class="a pill" style="left:856px;top:456px;width:113px;background:#04a9f4;letter-spacing:-0.517px;">Frio</div>
<div class="a pill" style="left:975px;top:456px;width:135px;background:#2f80b9;letter-spacing:-0.186px;">Bicicleta de carretera</div>
<div class="a pill" style="left:1116px;top:456px;width:114px;background:#fd7faa;letter-spacing:-0.331px;">Femenino</div>
<div class="a pill" style="left:1236.2px;top:456px;width:113.6px;background:#7c4dff;letter-spacing:0.006px;">Infantil</div>
<div class="a cl" style="top:456px;letter-spacing:-0.608px">CycloPath Bicycles</div>
<div class="a tag" style="top:459px;width:74.9px;letter-spacing:-0.582px">CycloPath Bicycles</div>
<svg class="ic" style="left:1610.2px;top:462.5px" width="9.300" height="8.600" viewBox="0 0 12 11"><path d="M6 1.400l1.300 2.900 3.100.400-2.300 2.100.600 3.100L6 8.400l-2.700 1.500.600-3.100-2.300-2.100 3.100-.400z" fill="#fdc935" stroke="#fdc935" stroke-width="1.900" stroke-linejoin="round"/></svg>
<div class="a " style="left:1738.3px;top:456.6px;height:20px;line-height:20px;font-size:10.9px;letter-spacing:-0.591px;">€1,175</div>
<div class="a " style="left:1858.4px;top:456.6px;height:20px;line-height:20px;font-size:11.2px;letter-spacing:0.000px;">5</div>
<div class="a rb" style="left:277px;top:479px;width:1625px;height:1px;opacity:0.50"></div>
<div class="a rb" style="left:277px;top:480px;width:1625px;height:1px;opacity:0.50"></div>
<svg class="ic" style="left:297.8px;top:486.7px" width="12.4" height="12.4" viewBox="0 0 13 13"><circle cx="6.500" cy="6.500" r="5.500" fill="none" stroke="#87909e" stroke-width="1.250"/><circle cx="6.500" cy="6.500" r="3.500" fill="#87909e"/></svg>
<div class="a " style="left:319.2px;top:482.2px;height:20px;line-height:20px;font-size:11.2px;letter-spacing:-0.244px;">Bicicleta de carretera para niñas: Golden Glide 970 Amarillo Brillante</div>
<div class="a av" style="left:737.9px;top:482.9px;width:19px;height:19px;">A</div>
<div class="a pill" style="left:856px;top:482px;width:113px;background:#04a9f4;letter-spacing:-0.517px;">Frio</div>
<div class="a pill" style="left:975px;top:482px;width:135px;background:#2f80b9;letter-spacing:-0.186px;">Bicicleta de carretera</div>
<div class="a pill" style="left:1116px;top:482px;width:114px;background:#fd7faa;letter-spacing:-0.331px;">Femenino</div>
<div class="a pill" style="left:1236.2px;top:482px;width:113.6px;background:#7c4dff;letter-spacing:0.006px;">Infantil</div>
<div class="a cl" style="top:482px;letter-spacing:-0.543px">VeloVista</div>
<div class="a tag" style="top:485px;width:42.4px;letter-spacing:-0.453px">VeloVista</div>
<svg class="ic" style="left:1610.2px;top:488.5px" width="9.300" height="8.600" viewBox="0 0 12 11"><path d="M6 1.400l1.300 2.900 3.100.400-2.300 2.100.600 3.100L6 8.400l-2.700 1.500.600-3.100-2.300-2.100 3.100-.400z" fill="#fdc935" stroke="#fdc935" stroke-width="1.900" stroke-linejoin="round"/></svg>
<div class="a " style="left:1738.3px;top:482.6px;height:20px;line-height:20px;font-size:10.9px;letter-spacing:-0.591px;">€1,175</div>
<div class="a " style="left:1858.4px;top:482.6px;height:20px;line-height:20px;font-size:11.2px;letter-spacing:0.000px;">8</div>
<div class="a rb" style="left:277px;top:505px;width:1625px;height:1px;opacity:0.25"></div>
<div class="a rb" style="left:277px;top:506px;width:1625px;height:1px;opacity:0.75"></div>
<svg class="ic" style="left:297.8px;top:513.7px" width="12.4" height="12.4" viewBox="0 0 13 13"><circle cx="6.500" cy="6.500" r="5.500" fill="none" stroke="#87909e" stroke-width="1.250"/><circle cx="6.500" cy="6.500" r="3.500" fill="#87909e"/></svg>
<div class="a " style="left:319.2px;top:509.2px;height:20px;line-height:20px;font-size:11.2px;letter-spacing:-0.321px;">Bicicleta de carretera para niñas: Blaze Blaster 920 Naranja Neón</div>
<div class="a av" style="left:737.9px;top:509.9px;width:19px;height:19px;">A</div>
<div class="a pill" style="left:856px;top:509px;width:113px;background:#04a9f4;letter-spacing:-0.517px;">Frio</div>
<div class="a pill" style="left:975px;top:509px;width:135px;background:#2f80b9;letter-spacing:-0.186px;">Bicicleta de carretera</div>
<div class="a pill" style="left:1116px;top:509px;width:114px;background:#fd7faa;letter-spacing:-0.331px;">Femenino</div>
<div class="a pill" style="left:1236.2px;top:509px;width:113.6px;background:#7c4dff;letter-spacing:0.006px;">Infantil</div>
<div class="a cl" style="top:509px;letter-spacing:-0.543px">VeloVista</div>
<div class="a tag" style="top:512px;width:42.4px;letter-spacing:-0.453px">VeloVista</div>
<svg class="ic" style="left:1610.2px;top:515.5px" width="9.300" height="8.600" viewBox="0 0 12 11"><path d="M6 1.400l1.300 2.900 3.100.400-2.300 2.100.600 3.100L6 8.400l-2.700 1.500.600-3.100-2.300-2.100 3.100-.400z" fill="#fdc935" stroke="#fdc935" stroke-width="1.900" stroke-linejoin="round"/></svg>
<div class="a " style="left:1738.3px;top:509.6px;height:20px;line-height:20px;font-size:10.9px;letter-spacing:-0.591px;">€1,175</div>
<div class="a " style="left:1858.4px;top:509.6px;height:20px;line-height:20px;font-size:11.2px;letter-spacing:0.000px;">5</div>
<div class="a rb" style="left:277px;top:532px;width:1625px;height:1px;"></div>
<svg class="ic" style="left:297.8px;top:539.7px" width="12.4" height="12.4" viewBox="0 0 13 13"><circle cx="6.500" cy="6.500" r="5.500" fill="none" stroke="#87909e" stroke-width="1.250"/><circle cx="6.500" cy="6.500" r="3.500" fill="#87909e"/></svg>
<div class="a " style="left:319.2px;top:535.2px;height:20px;line-height:20px;font-size:11.2px;letter-spacing:-0.375px;">Bicicleta de carretera para niñas: Ruby Racer 930 Rojo Rubí</div>
<div class="a av" style="left:737.9px;top:535.9px;width:19px;height:19px;">A</div>
<div class="a pill" style="left:856px;top:535px;width:113px;background:#04a9f4;letter-spacing:-0.517px;">Frio</div>
<div class="a pill" style="left:975px;top:535px;width:135px;background:#2f80b9;letter-spacing:-0.186px;">Bicicleta de carretera</div>
<div class="a pill" style="left:1116px;top:535px;width:114px;background:#fd7faa;letter-spacing:-0.331px;">Femenino</div>
<div class="a pill" style="left:1236.2px;top:535px;width:113.6px;background:#7c4dff;letter-spacing:0.006px;">Infantil</div>
<div class="a cl" style="top:535px;letter-spacing:-0.543px">VeloVista</div>
<div class="a tag" style="top:538px;width:42.4px;letter-spacing:-0.453px">VeloVista</div>
<svg class="ic" style="left:1610.2px;top:541.5px" width="9.300" height="8.600" viewBox="0 0 12 11"><path d="M6 1.400l1.300 2.900 3.100.400-2.300 2.100.600 3.100L6 8.400l-2.700 1.500.600-3.100-2.300-2.100 3.100-.400z" fill="#fdc935" stroke="#fdc935" stroke-width="1.900" stroke-linejoin="round"/></svg>
<div class="a " style="left:1738.3px;top:535.6px;height:20px;line-height:20px;font-size:10.9px;letter-spacing:-0.591px;">€1,175</div>
<div class="a " style="left:1858.4px;top:535.6px;height:20px;line-height:20px;font-size:11.2px;letter-spacing:0.000px;">5</div>
<div class="a rb" style="left:277px;top:558px;width:1625px;height:1px;opacity:0.75"></div>
<div class="a rb" style="left:277px;top:559px;width:1625px;height:1px;opacity:0.25"></div>
<svg class="ic" style="left:297.8px;top:565.7px" width="12.4" height="12.4" viewBox="0 0 13 13"><circle cx="6.500" cy="6.500" r="5.500" fill="none" stroke="#87909e" stroke-width="1.250"/><circle cx="6.500" cy="6.500" r="3.500" fill="#87909e"/></svg>
<div class="a " style="left:319.2px;top:561.2px;height:20px;line-height:20px;font-size:11.2px;letter-spacing:-0.339px;">Bicicleta de carretera para niñas: Pearl Pedaler 980 Blanco Satinado</div>
<div class="a av" style="left:737.9px;top:561.9px;width:19px;height:19px;">A</div>
<div class="a pill" style="left:856px;top:561px;width:113px;background:#04a9f4;letter-spacing:-0.517px;">Frio</div>
<div class="a pill" style="left:975px;top:561px;width:135px;background:#2f80b9;letter-spacing:-0.186px;">Bicicleta de carretera</div>
<div class="a pill" style="left:1116px;top:561px;width:114px;background:#fd7faa;letter-spacing:-0.331px;">Femenino</div>
<div class="a pill" style="left:1236.2px;top:561px;width:113.6px;background:#7c4dff;letter-spacing:0.006px;">Infantil</div>
<div class="a cl" style="top:561px;letter-spacing:-0.375px">RideRevolution</div>
<div class="a tag" style="top:564px;width:63.7px;letter-spacing:-0.420px">RideRevolution</div>
<svg class="ic" style="left:1610.2px;top:567.5px" width="9.300" height="8.600" viewBox="0 0 12 11"><path d="M6 1.400l1.300 2.900 3.100.400-2.300 2.100.600 3.100L6 8.400l-2.700 1.500.600-3.100-2.300-2.100 3.100-.400z" fill="#fdc935" stroke="#fdc935" stroke-width="1.900" stroke-linejoin="round"/></svg>
<div class="a " style="left:1738.3px;top:561.6px;height:20px;line-height:20px;font-size:10.9px;letter-spacing:-0.591px;">€1,175</div>
<div class="a " style="left:1858.4px;top:561.6px;height:20px;line-height:20px;font-size:11.2px;letter-spacing:0.000px;">8</div>
<div class="a rb" style="left:277px;top:584px;width:1625px;height:1px;opacity:0.50"></div>
<div class="a rb" style="left:277px;top:585px;width:1625px;height:1px;opacity:0.50"></div>
<svg class="ic" style="left:297.8px;top:591.7px" width="12.4" height="12.4" viewBox="0 0 13 13"><circle cx="6.500" cy="6.500" r="5.500" fill="none" stroke="#87909e" stroke-width="1.250"/><circle cx="6.500" cy="6.500" r="3.500" fill="#87909e"/></svg>
<div class="a " style="left:319.2px;top:587.2px;height:20px;line-height:20px;font-size:11.2px;letter-spacing:-0.317px;">Bicicleta de crucero para niñas: Azure Angel 810 Azul Cielo</div>
<div class="a av" style="left:737.9px;top:587.9px;width:19px;height:19px;">J</div>
<div class="a pill" style="left:856px;top:587px;width:113px;background:#04a9f4;letter-spacing:-0.517px;">Frio</div>
<div class="a pill" style="left:975px;top:587px;width:135px;background:#2ecd6f;letter-spacing:-0.241px;">Bicicleta de paseo</div>
<div class="a pill" style="left:1116px;top:587px;width:114px;background:#fd7faa;letter-spacing:-0.331px;">Femenino</div>
<div class="a pill" style="left:1236.2px;top:587px;width:113.6px;background:#7c4dff;letter-spacing:0.006px;">Infantil</div>
<div class="a cl" style="top:587px;letter-spacing:-0.539px">Chain Reaction Cycles</div>
<div class="a tag" style="top:590px;width:88px;letter-spacing:-0.549px">Chain Reaction Cycles</div>
<svg class="ic" style="left:1610.2px;top:593.5px" width="9.300" height="8.600" viewBox="0 0 12 11"><path d="M6 1.400l1.300 2.900 3.100.400-2.300 2.100.600 3.100L6 8.400l-2.700 1.500.600-3.100-2.300-2.100 3.100-.400z" fill="#fdc935" stroke="#fdc935" stroke-width="1.900" stroke-linejoin="round"/></svg>
<div class="a " style="left:1738.3px;top:587.6px;height:20px;line-height:20px;font-size:10.9px;letter-spacing:-0.590px;">€550</div>
<div class="a " style="left:1858.4px;top:587.6px;height:20px;line-height:20px;font-size:11.2px;letter-spacing:0.000px;">3</div>
<div class="a rb" style="left:277px;top:610px;width:1625px;height:1px;opacity:0.25"></div>
<div class="a rb" style="left:277px;top:611px;width:1625px;height:1px;opacity:0.75"></div>
<svg class="ic" style="left:299.5px;top:621.8px" width="9" height="9" viewBox="0 0 16 16" fill="none" stroke="#9aa1ac" stroke-width="1.6" stroke-linecap="round" stroke-linejoin="round" ><path d="M8 2.800v10.400M2.800 8h10.400"/></svg>
<div class="a " style="left:319.2px;top:616.3px;height:20px;line-height:20px;font-size:11.1px;letter-spacing:-0.585px;color:#838b97;">Añadir Tarea</div>
<svg class="ic" style="left:258.500px;top:660px" width="6.400" height="3.900" viewBox="0 0 7 4.500"><path d="M0 0h7L3.500 4.500z" fill="#5c6470"/></svg>
<div class="a " style="left:277px;top:653.4px;width:89px;height:17.8px;background:#5f48ea;border-radius:4px"></div>
<svg class="ic" style="left:281.500px;top:657px" width="10.400" height="10.400" viewBox="0 0 13 13"><circle cx="6.500" cy="6.500" r="5.400" fill="none" stroke="#fff" stroke-width="1.400"/><circle cx="6.500" cy="6.500" r="3.300" fill="#fff"/></svg>
<div class="a " style="left:296.7px;top:652.6px;height:20px;line-height:20px;font-size:9px;letter-spacing:-0.900px;font-weight:700;color:#fff;">PRESUPUESTAR</div>
<div class="a " style="left:377.5px;top:652.6px;height:20px;line-height:20px;font-size:8.6px;letter-spacing:-0.774px;color:#656f7d;">16</div>
<svg class="ic" style="left:394.4px;top:656.2px" width="12" height="12" viewBox="0 0 16 16" fill="none" stroke="none" stroke-width="1.4" stroke-linecap="round" stroke-linejoin="round" color="#656f7d"><circle cx="3.400" cy="8" r="1.150" fill="currentColor" stroke="none"/><circle cx="8" cy="8" r="1.150" fill="currentColor" stroke="none"/><circle cx="12.600" cy="8" r="1.150" fill="currentColor" stroke="none"/></svg>
<svg class="ic" style="left:413.6px;top:657.5px" width="9.4" height="9.4" viewBox="0 0 16 16" fill="none" stroke="#656f7d" stroke-width="1.6" stroke-linecap="round" stroke-linejoin="round" ><path d="M8 2.800v10.400M2.800 8h10.400"/></svg>
<div class="a " style="left:428.3px;top:652.6px;height:20px;line-height:20px;font-size:9.7px;letter-spacing:-0.494px;color:#656f7d;">Añadir Tarea</div>
<div class="a " style="left:280.3px;top:676.8px;height:20px;line-height:20px;font-size:9.4px;letter-spacing:-0.126px;color:#656f7d;">Nombre</div>
<div class="a " style="left:741.3px;top:676.8px;height:20px;line-height:20px;font-size:9.3px;letter-spacing:-0.478px;color:#656f7d;">Persona asignada</div>
<div class="a " style="left:861.3px;top:676.8px;height:20px;line-height:20px;font-size:9.4px;letter-spacing:-0.401px;color:#656f7d;">Temperatura</div>
<div class="a " style="left:981.4px;top:676.8px;height:20px;line-height:20px;font-size:9.4px;letter-spacing:-0.207px;color:#656f7d;">Familia de producto</div>
<div class="a " style="left:1122.3px;top:676.8px;height:20px;line-height:20px;font-size:9.4px;letter-spacing:-0.491px;color:#656f7d;">Género</div>
<div class="a " style="left:1242.4px;top:676.8px;height:20px;line-height:20px;font-size:9px;letter-spacing:-0.451px;color:#656f7d;">Talla</div>
<div class="a " style="left:1362.3px;top:676.8px;height:20px;line-height:20px;font-size:9.4px;letter-spacing:-0.328px;color:#656f7d;">Cliente</div>
<div class="a " style="left:1494.2px;top:676.8px;height:20px;line-height:20px;font-size:9.4px;letter-spacing:-0.445px;color:#656f7d;">JOIN Clientes</div>
<div class="a " style="left:1614.6px;top:676.8px;height:20px;line-height:20px;font-size:9.4px;letter-spacing:-0.234px;color:#656f7d;">Puntuación estraté...</div>
<div class="a " style="left:1738.1px;top:676.8px;height:20px;line-height:20px;font-size:9.4px;letter-spacing:-0.212px;color:#656f7d;">Precio Unitario</div>
<div class="a" style="left:1857.800px;top:676.8px;width:18px;height:20px;line-height:20px;font-size:9.4px;color:#656f7d;letter-spacing:-0.989px;overflow:hidden;-webkit-mask-image:linear-gradient(90deg,#000 25%,transparent 95%)">Unidades</div>
<svg class="ic" style="left:1482px;top:681.2px" width="10" height="10" viewBox="0 0 16 16" fill="none" stroke="#656f7d" stroke-width="1.5" stroke-linecap="round" stroke-linejoin="round" ><path d="M2.400 8.600 8 3M4.600 2.800h3.600v3.600"/><path d="M13.600 7.400 8 13M11.400 13.200H7.800V9.600"/></svg>
<svg class="ic" style="left:1603.25px;top:682.75px" width="7.5" height="7.5" viewBox="0 0 16 16" fill="none" stroke="#656f7d" stroke-width="1.7" stroke-linecap="round" stroke-linejoin="round" ><path d="M3.600 12.400 12.400 3.600M5.600 3.600h6.800v6.800"/></svg>
<div class="a " style="left:1704.9px;top:679px;width:15.2px;height:15.2px;border:1px solid #c9cdd4;border-radius:50%;background:#f4f5f7"></div>
<svg class="ic" style="left:1708.25px;top:682.35px" width="8.5" height="8.5" viewBox="0 0 16 16" fill="none" stroke="#2a2e34" stroke-width="1.6" stroke-linecap="round" stroke-linejoin="round" ><path d="M8 3v10M4 9l4 4 4-4"/></svg>
<svg class="ic" style="left:1878.55px;top:681.25px" width="10.5" height="10.5" viewBox="0 0 16 16" fill="none" stroke="#4f5762" stroke-width="1.3" stroke-linecap="round" stroke-linejoin="round" ><circle cx="8" cy="8" r="6.200"/><path d="M8 5.200v5.600M5.200 8h5.600"/></svg>
<svg class="ic" style="left:297.8px;top:704.7px" width="12.4" height="12.4" viewBox="0 0 13 13"><circle cx="6.500" cy="6.500" r="5.500" fill="none" stroke="#5f48ea" stroke-width="1.250"/><circle cx="6.500" cy="6.500" r="3.500" fill="#5f48ea"/></svg>
<div class="a " style="left:319.2px;top:700.2px;height:20px;line-height:20px;font-size:11.2px;letter-spacing:-0.300px;">Bicicleta de montaña para hombre: Deep Sea 610 Azul Profundo</div>
<svg class="ic" style="left:737.9px;top:700.9px" width="19" height="19" viewBox="0 0 20 20"><defs><clipPath id="ac8"><circle cx="10" cy="10" r="10"/></clipPath><linearGradient id="ag8" x1="0" x2="1" y1="0" y2="0"><stop offset="0" stop-color="#f1f1f1"/><stop offset=".45" stop-color="#c4c4c4"/><stop offset=".7" stop-color="#6a6a6a"/><stop offset="1" stop-color="#454545"/></linearGradient><linearGradient id="ab8" x1="0" x2="1" y1="0" y2="0"><stop offset="0" stop-color="#6e6e6e"/><stop offset=".4" stop-color="#2a2a2a"/><stop offset="1" stop-color="#0a0a0a"/></linearGradient><filter id="af8" x="-10%" y="-10%" width="120%" height="120%"><feGaussianBlur stdDeviation=".6"/></filter></defs><g clip-path="url(#ac8)"><rect width="20" height="20" fill="#c9c9c9"/><g filter="url(#af8)"><ellipse cx="10.200" cy="8.300" rx="5.300" ry="7.400" fill="url(#ag8)"/><path d="M5.300 7.500h3.500v1.200H5.300zM10.700 7.500h3.600v1.200h-3.600z" fill="#303030"/><path d="M9.300 8.500h1.300v3H9.300z" fill="#dcdcdc"/><path d="M4.800 12.600c1.500-.9 3.200.2 5.200-.4 2-.6 3.900-.3 5.200.4l2.600 2.400c-.8 3.400-4.400 5.400-7.800 5.400s-5.600-1.500-6.600-4z" fill="url(#ab8)"/><ellipse cx="9.300" cy="15.300" rx="2" ry="1.800" fill="#b0b0b0"/><ellipse cx="9.800" cy="13.400" rx="1.300" ry=".55" fill="#111"/></g></g></svg>
<div class="a pill" style="left:856px;top:700px;width:113px;background:#f9d900;letter-spacing:-0.249px;color:#3b3500;-webkit-text-stroke:.15px currentColor;">Templado</div>
<div class="a pill" style="left:975px;top:700px;width:135px;background:#e50000;letter-spacing:-0.129px;">Bicicleta de montaña</div>
<div class="a pill" style="left:1116px;top:700px;width:114px;background:#3498db;letter-spacing:-0.188px;">Masculino</div>
<div class="a pill" style="left:1236.2px;top:700px;width:113.6px;background:#ff7800;letter-spacing:0.111px;">Adulto</div>
<div class="a cl" style="top:700px;letter-spacing:-0.809px">CycleScape</div>
<div class="a tag" style="top:703px;width:50px;letter-spacing:-0.716px">CycleScape</div>
<svg class="ic" style="left:1610.2px;top:706.5px" width="9.300" height="8.600" viewBox="0 0 12 11"><path d="M6 1.400l1.300 2.900 3.100.400-2.300 2.100.600 3.100L6 8.400l-2.700 1.500.600-3.100-2.300-2.100 3.100-.400z" fill="#fdc935" stroke="#fdc935" stroke-width="1.900" stroke-linejoin="round"/></svg>
<svg class="ic" style="left:1621.6px;top:706.5px" width="9.300" height="8.600" viewBox="0 0 12 11"><path d="M6 1.400l1.300 2.900 3.100.400-2.300 2.100.600 3.100L6 8.400l-2.700 1.500.600-3.100-2.300-2.100 3.100-.400z" fill="#fdc935" stroke="#fdc935" stroke-width="1.900" stroke-linejoin="round"/></svg>
<svg class="ic" style="left:1633px;top:706.5px" width="9.300" height="8.600" viewBox="0 0 12 11"><path d="M6 1.400l1.300 2.900 3.100.400-2.300 2.100.600 3.100L6 8.400l-2.700 1.500.600-3.100-2.300-2.100 3.100-.400z" fill="#fdc935" stroke="#fdc935" stroke-width="1.900" stroke-linejoin="round"/></svg>
<svg class="ic" style="left:1644.4px;top:706.5px" width="9.300" height="8.600" viewBox="0 0 12 11"><path d="M6 1.400l1.300 2.900 3.100.400-2.300 2.100.600 3.100L6 8.400l-2.700 1.500.600-3.100-2.300-2.100 3.100-.400z" fill="#fdc935" stroke="#fdc935" stroke-width="1.900" stroke-linejoin="round"/></svg>
<svg class="ic" style="left:1655.8px;top:706.5px" width="9.300" height="8.600" viewBox="0 0 12 11"><path d="M6 1.400l1.300 2.900 3.100.400-2.300 2.100.600 3.100L6 8.400l-2.700 1.500.600-3.100-2.300-2.100 3.100-.400z" fill="#fdc935" stroke="#fdc935" stroke-width="1.900" stroke-linejoin="round"/></svg>
<div class="a " style="left:1738.3px;top:700.6px;height:20px;line-height:20px;font-size:10.9px;letter-spacing:-0.551px;">€1,600</div>
<div class="a " style="left:1858.4px;top:700.6px;height:20px;line-height:20px;font-size:11.2px;letter-spacing:0.000px;">8</div>
<div class="a rb" style="left:277px;top:723px;width:1625px;height:1px;opacity:0.45"></div>
<div class="a rb" style="left:277px;top:724px;width:1625px;height:1px;opacity:0.55"></div>
<svg class="ic" style="left:297.8px;top:731.7px" width="12.4" height="12.4" viewBox="0 0 13 13"><circle cx="6.500" cy="6.500" r="5.500" fill="none" stroke="#5f48ea" stroke-width="1.250"/><circle cx="6.500" cy="6.500" r="3.500" fill="#5f48ea"/></svg>
<div class="a " style="left:319.2px;top:727.2px;height:20px;line-height:20px;font-size:11.2px;letter-spacing:-0.256px;">Bicicleta de carretera para mujer: Sunshine Sprinter 1180 Amarillo Brillante</div>
<svg class="ic" style="left:737.9px;top:727.9px" width="19" height="19" viewBox="0 0 20 20"><defs><clipPath id="ac9"><circle cx="10" cy="10" r="10"/></clipPath><linearGradient id="ag9" x1="0" x2="1" y1="0" y2="0"><stop offset="0" stop-color="#f1f1f1"/><stop offset=".45" stop-color="#c4c4c4"/><stop offset=".7" stop-color="#6a6a6a"/><stop offset="1" stop-color="#454545"/></linearGradient><linearGradient id="ab9" x1="0" x2="1" y1="0" y2="0"><stop offset="0" stop-color="#6e6e6e"/><stop offset=".4" stop-color="#2a2a2a"/><stop offset="1" stop-color="#0a0a0a"/></linearGradient><filter id="af9" x="-10%" y="-10%" width="120%" height="120%"><feGaussianBlur stdDeviation=".6"/></filter></defs><g clip-path="url(#ac9)"><rect width="20" height="20" fill="#c9c9c9"/><g filter="url(#af9)"><ellipse cx="10.200" cy="8.300" rx="5.300" ry="7.400" fill="url(#ag9)"/><path d="M5.300 7.500h3.500v1.200H5.300zM10.700 7.500h3.600v1.200h-3.600z" fill="#303030"/><path d="M9.300 8.500h1.300v3H9.300z" fill="#dcdcdc"/><path d="M4.800 12.600c1.500-.9 3.200.2 5.200-.4 2-.6 3.900-.3 5.200.4l2.600 2.400c-.8 3.400-4.400 5.400-7.800 5.400s-5.600-1.500-6.600-4z" fill="url(#ab9)"/><ellipse cx="9.300" cy="15.300" rx="2" ry="1.800" fill="#b0b0b0"/><ellipse cx="9.800" cy="13.400" rx="1.300" ry=".55" fill="#111"/></g></g></svg>
<div class="a pill" style="left:856px;top:727px;width:113px;background:#f9d900;letter-spacing:-0.249px;color:#3b3500;-webkit-text-stroke:.15px currentColor;">Templado</div>
<div class="a pill" style="left:975px;top:727px;width:135px;background:#2f80b9;letter-spacing:-0.186px;">Bicicleta de carretera</div>
<div class="a pill" style="left:1116px;top:727px;width:114px;background:#fd7faa;letter-spacing:-0.331px;">Femenino</div>
<div class="a pill" style="left:1236.2px;top:727px;width:113.6px;background:#ff7800;letter-spacing:0.111px;">Adulto</div>
<div class="a cl" style="top:727px;letter-spacing:-0.589px">Cycle City</div>
<div class="a tag" style="top:730px;width:44.6px;letter-spacing:-0.555px">Cycle City</div>
<svg class="ic" style="left:1610.2px;top:733.5px" width="9.300" height="8.600" viewBox="0 0 12 11"><path d="M6 1.400l1.300 2.900 3.100.400-2.300 2.100.600 3.100L6 8.400l-2.700 1.500.600-3.100-2.300-2.100 3.100-.400z" fill="#fdc935" stroke="#fdc935" stroke-width="1.900" stroke-linejoin="round"/></svg>
<svg class="ic" style="left:1621.6px;top:733.5px" width="9.300" height="8.600" viewBox="0 0 12 11"><path d="M6 1.400l1.300 2.900 3.100.400-2.300 2.100.600 3.100L6 8.400l-2.700 1.500.600-3.100-2.300-2.100 3.100-.400z" fill="#fdc935" stroke="#fdc935" stroke-width="1.900" stroke-linejoin="round"/></svg>
<svg class="ic" style="left:1633px;top:733.5px" width="9.300" height="8.600" viewBox="0 0 12 11"><path d="M6 1.400l1.300 2.900 3.100.400-2.300 2.100.600 3.100L6 8.400l-2.700 1.500.600-3.100-2.300-2.100 3.100-.400z" fill="#fdc935" stroke="#fdc935" stroke-width="1.900" stroke-linejoin="round"/></svg>
<svg class="ic" style="left:1644.4px;top:733.5px" width="9.300" height="8.600" viewBox="0 0 12 11"><path d="M6 1.400l1.300 2.900 3.100.400-2.300 2.100.600 3.100L6 8.400l-2.700 1.500.600-3.100-2.300-2.100 3.100-.400z" fill="#fdc935" stroke="#fdc935" stroke-width="1.900" stroke-linejoin="round"/></svg>
<svg class="ic" style="left:1655.8px;top:733.5px" width="9.300" height="8.600" viewBox="0 0 12 11"><path d="M6 1.400l1.300 2.900 3.100.400-2.300 2.100.600 3.100L6 8.400l-2.700 1.500.600-3.100-2.300-2.100 3.100-.400z" fill="#fdc935" stroke="#fdc935" stroke-width="1.900" stroke-linejoin="round"/></svg>
<div class="a " style="left:1738.3px;top:727.6px;height:20px;line-height:20px;font-size:10.9px;letter-spacing:-0.591px;">€1,175</div>
<div class="a " style="left:1858.4px;top:727.6px;height:20px;line-height:20px;font-size:11.2px;letter-spacing:0.000px;">3</div>
<div class="a rb" style="left:277px;top:749px;width:1625px;height:1px;opacity:0.20"></div>
<div class="a rb" style="left:277px;top:750px;width:1625px;height:1px;opacity:0.80"></div>
<svg class="ic" style="left:297.8px;top:757.7px" width="12.4" height="12.4" viewBox="0 0 13 13"><circle cx="6.500" cy="6.500" r="5.500" fill="none" stroke="#5f48ea" stroke-width="1.250"/><circle cx="6.500" cy="6.500" r="3.500" fill="#5f48ea"/></svg>
<div class="a " style="left:319.2px;top:753.2px;height:20px;line-height:20px;font-size:11.2px;letter-spacing:-0.367px;">Bicicleta de carretera para mujer: Rose Roadster 1120 Rosa Brillante</div>
<svg class="ic" style="left:737.9px;top:753.9px" width="19" height="19" viewBox="0 0 20 20"><defs><clipPath id="ac10"><circle cx="10" cy="10" r="10"/></clipPath><linearGradient id="ag10" x1="0" x2="1" y1="0" y2="0"><stop offset="0" stop-color="#f1f1f1"/><stop offset=".45" stop-color="#c4c4c4"/><stop offset=".7" stop-color="#6a6a6a"/><stop offset="1" stop-color="#454545"/></linearGradient><linearGradient id="ab10" x1="0" x2="1" y1="0" y2="0"><stop offset="0" stop-color="#6e6e6e"/><stop offset=".4" stop-color="#2a2a2a"/><stop offset="1" stop-color="#0a0a0a"/></linearGradient><filter id="af10" x="-10%" y="-10%" width="120%" height="120%"><feGaussianBlur stdDeviation=".6"/></filter></defs><g clip-path="url(#ac10)"><rect width="20" height="20" fill="#c9c9c9"/><g filter="url(#af10)"><ellipse cx="10.200" cy="8.300" rx="5.300" ry="7.400" fill="url(#ag10)"/><path d="M5.300 7.500h3.500v1.200H5.300zM10.700 7.500h3.600v1.200h-3.600z" fill="#303030"/><path d="M9.300 8.500h1.300v3H9.300z" fill="#dcdcdc"/><path d="M4.800 12.600c1.500-.9 3.200.2 5.200-.4 2-.6 3.900-.3 5.200.4l2.600 2.400c-.8 3.400-4.400 5.400-7.800 5.400s-5.600-1.500-6.600-4z" fill="url(#ab10)"/><ellipse cx="9.300" cy="15.300" rx="2" ry="1.800" fill="#b0b0b0"/><ellipse cx="9.800" cy="13.400" rx="1.300" ry=".55" fill="#111"/></g></g></svg>
<div class="a pill" style="left:856px;top:753px;width:113px;background:#ff7800;letter-spacing:-0.282px;">Caliente</div>
<div class="a pill" style="left:975px;top:753px;width:135px;background:#2f80b9;letter-spacing:-0.186px;">Bicicleta de carretera</div>
<div class="a pill" style="left:1116px;top:753px;width:114px;background:#fd7faa;letter-spacing:-0.331px;">Femenino</div>
<div class="a pill" style="left:1236.2px;top:753px;width:113.6px;background:#ff7800;letter-spacing:0.111px;">Adulto</div>
<div class="a cl" style="top:753px;letter-spacing:-0.589px">Cycle City</div>
<div class="a tag" style="top:756px;width:44.6px;letter-spacing:-0.555px">Cycle City</div>
<svg class="ic" style="left:1610.2px;top:759.5px" width="9.300" height="8.600" viewBox="0 0 12 11"><path d="M6 1.400l1.300 2.900 3.100.400-2.300 2.100.600 3.100L6 8.400l-2.700 1.500.600-3.100-2.300-2.100 3.100-.400z" fill="#fdc935" stroke="#fdc935" stroke-width="1.900" stroke-linejoin="round"/></svg>
<svg class="ic" style="left:1621.6px;top:759.5px" width="9.300" height="8.600" viewBox="0 0 12 11"><path d="M6 1.400l1.300 2.900 3.100.400-2.300 2.100.600 3.100L6 8.400l-2.700 1.500.600-3.100-2.300-2.100 3.100-.400z" fill="#fdc935" stroke="#fdc935" stroke-width="1.900" stroke-linejoin="round"/></svg>
<svg class="ic" style="left:1633px;top:759.5px" width="9.300" height="8.600" viewBox="0 0 12 11"><path d="M6 1.400l1.300 2.900 3.100.400-2.300 2.100.600 3.100L6 8.400l-2.700 1.500.600-3.100-2.300-2.100 3.100-.400z" fill="#fdc935" stroke="#fdc935" stroke-width="1.900" stroke-linejoin="round"/></svg>
<svg class="ic" style="left:1644.4px;top:759.5px" width="9.300" height="8.600" viewBox="0 0 12 11"><path d="M6 1.400l1.300 2.900 3.100.400-2.300 2.100.600 3.100L6 8.400l-2.700 1.500.600-3.100-2.300-2.100 3.100-.400z" fill="#fdc935" stroke="#fdc935" stroke-width="1.900" stroke-linejoin="round"/></svg>
<svg class="ic" style="left:1655.8px;top:759.5px" width="9.300" height="8.600" viewBox="0 0 12 11"><path d="M6 1.400l1.300 2.900 3.100.400-2.300 2.100.600 3.100L6 8.400l-2.700 1.500.600-3.100-2.300-2.100 3.100-.400z" fill="#fdc935" stroke="#fdc935" stroke-width="1.900" stroke-linejoin="round"/></svg>
<div class="a " style="left:1738.3px;top:753.6px;height:20px;line-height:20px;font-size:10.9px;letter-spacing:-0.591px;">€1,175</div>
<div class="a " style="left:1858.4px;top:753.6px;height:20px;line-height:20px;font-size:11.2px;letter-spacing:0.000px;">8</div>
<div class="a rb" style="left:277px;top:776px;width:1625px;height:1px;"></div>
<svg class="ic" style="left:297.8px;top:783.7px" width="12.4" height="12.4" viewBox="0 0 13 13"><circle cx="6.500" cy="6.500" r="5.500" fill="none" stroke="#5f48ea" stroke-width="1.250"/><circle cx="6.500" cy="6.500" r="3.500" fill="#5f48ea"/></svg>
<div class="a " style="left:319.2px;top:779.2px;height:20px;line-height:20px;font-size:11.2px;letter-spacing:-0.327px;">Bicicleta de crucero para niñas: Coral Coast 860 Naranja Coral</div>
<svg class="ic" style="left:737.9px;top:779.9px" width="19" height="19" viewBox="0 0 20 20"><defs><clipPath id="ac11"><circle cx="10" cy="10" r="10"/></clipPath><linearGradient id="ag11" x1="0" x2="1" y1="0" y2="0"><stop offset="0" stop-color="#f1f1f1"/><stop offset=".45" stop-color="#c4c4c4"/><stop offset=".7" stop-color="#6a6a6a"/><stop offset="1" stop-color="#454545"/></linearGradient><linearGradient id="ab11" x1="0" x2="1" y1="0" y2="0"><stop offset="0" stop-color="#6e6e6e"/><stop offset=".4" stop-color="#2a2a2a"/><stop offset="1" stop-color="#0a0a0a"/></linearGradient><filter id="af11" x="-10%" y="-10%" width="120%" height="120%"><feGaussianBlur stdDeviation=".6"/></filter></defs><g clip-path="url(#ac11)"><rect width="20" height="20" fill="#c9c9c9"/><g filter="url(#af11)"><ellipse cx="10.200" cy="8.300" rx="5.300" ry="7.400" fill="url(#ag11)"/><path d="M5.300 7.500h3.500v1.200H5.300zM10.700 7.500h3.600v1.200h-3.600z" fill="#303030"/><path d="M9.300 8.500h1.300v3H9.300z" fill="#dcdcdc"/><path d="M4.800 12.600c1.500-.9 3.200.2 5.200-.4 2-.6 3.900-.3 5.200.4l2.600 2.400c-.8 3.400-4.400 5.400-7.800 5.400s-5.600-1.500-6.600-4z" fill="url(#ab11)"/><ellipse cx="9.300" cy="15.300" rx="2" ry="1.800" fill="#b0b0b0"/><ellipse cx="9.800" cy="13.400" rx="1.300" ry=".55" fill="#111"/></g></g></svg>
<div class="a pill" style="left:856px;top:779px;width:113px;background:#f9d900;letter-spacing:-0.249px;color:#3b3500;-webkit-text-stroke:.15px currentColor;">Templado</div>
<div class="a pill" style="left:975px;top:779px;width:135px;background:#2ecd6f;letter-spacing:-0.241px;">Bicicleta de paseo</div>
<div class="a pill" style="left:1116px;top:779px;width:114px;background:#fd7faa;letter-spacing:-0.331px;">Femenino</div>
<div class="a pill" style="left:1236.2px;top:779px;width:113.6px;background:#7c4dff;letter-spacing:0.006px;">Infantil</div>
<div class="a cl" style="top:779px;letter-spacing:-0.589px">Cycle City</div>
<div class="a tag" style="top:782px;width:44.6px;letter-spacing:-0.555px">Cycle City</div>
<svg class="ic" style="left:1610.2px;top:785.5px" width="9.300" height="8.600" viewBox="0 0 12 11"><path d="M6 1.400l1.300 2.900 3.100.400-2.300 2.100.600 3.100L6 8.400l-2.700 1.500.600-3.100-2.300-2.100 3.100-.400z" fill="#fdc935" stroke="#fdc935" stroke-width="1.900" stroke-linejoin="round"/></svg>
<svg class="ic" style="left:1621.6px;top:785.5px" width="9.300" height="8.600" viewBox="0 0 12 11"><path d="M6 1.400l1.300 2.900 3.100.400-2.300 2.100.600 3.100L6 8.400l-2.700 1.500.600-3.100-2.300-2.100 3.100-.400z" fill="#fdc935" stroke="#fdc935" stroke-width="1.900" stroke-linejoin="round"/></svg>
<svg class="ic" style="left:1633px;top:785.5px" width="9.300" height="8.600" viewBox="0 0 12 11"><path d="M6 1.400l1.300 2.900 3.100.400-2.300 2.100.600 3.100L6 8.400l-2.700 1.500.600-3.100-2.300-2.100 3.100-.400z" fill="#fdc935" stroke="#fdc935" stroke-width="1.900" stroke-linejoin="round"/></svg>
<svg class="ic" style="left:1644.4px;top:785.5px" width="9.300" height="8.600" viewBox="0 0 12 11"><path d="M6 1.400l1.300 2.900 3.100.400-2.300 2.100.600 3.100L6 8.400l-2.700 1.500.600-3.100-2.300-2.100 3.100-.400z" fill="#fdc935" stroke="#fdc935" stroke-width="1.900" stroke-linejoin="round"/></svg>
<svg class="ic" style="left:1655.8px;top:785.5px" width="9.300" height="8.600" viewBox="0 0 12 11"><path d="M6 1.400l1.300 2.900 3.100.400-2.300 2.100.600 3.100L6 8.400l-2.700 1.500.600-3.100-2.300-2.100 3.100-.400z" fill="#fdc935" stroke="#fdc935" stroke-width="1.900" stroke-linejoin="round"/></svg>
<div class="a " style="left:1738.3px;top:779.6px;height:20px;line-height:20px;font-size:10.9px;letter-spacing:-0.590px;">€670</div>
<div class="a " style="left:1858.4px;top:779.6px;height:20px;line-height:20px;font-size:11.2px;letter-spacing:0.000px;">8</div>
<div class="a rb" style="left:277px;top:802px;width:1625px;height:1px;opacity:0.70"></div>
<div class="a rb" style="left:277px;top:803px;width:1625px;height:1px;opacity:0.30"></div>
<svg class="ic" style="left:297.8px;top:809.7px" width="12.4" height="12.4" viewBox="0 0 13 13"><circle cx="6.500" cy="6.500" r="5.500" fill="none" stroke="#5f48ea" stroke-width="1.250"/><circle cx="6.500" cy="6.500" r="3.500" fill="#5f48ea"/></svg>
<div class="a " style="left:319.2px;top:805.2px;height:20px;line-height:20px;font-size:11.2px;letter-spacing:-0.313px;">Bicicleta de carretera para mujer: Azure Accelerator 1110 Azul Cielo</div>
<svg class="ic" style="left:737.9px;top:805.9px" width="19" height="19" viewBox="0 0 20 20"><defs><clipPath id="ac12"><circle cx="10" cy="10" r="10"/></clipPath><linearGradient id="ag12" x1="0" x2="1" y1="0" y2="0"><stop offset="0" stop-color="#f1f1f1"/><stop offset=".45" stop-color="#c4c4c4"/><stop offset=".7" stop-color="#6a6a6a"/><stop offset="1" stop-color="#454545"/></linearGradient><linearGradient id="ab12" x1="0" x2="1" y1="0" y2="0"><stop offset="0" stop-color="#6e6e6e"/><stop offset=".4" stop-color="#2a2a2a"/><stop offset="1" stop-color="#0a0a0a"/></linearGradient><filter id="af12" x="-10%" y="-10%" width="120%" height="120%"><feGaussianBlur stdDeviation=".6"/></filter></defs><g clip-path="url(#ac12)"><rect width="20" height="20" fill="#c9c9c9"/><g filter="url(#af12)"><ellipse cx="10.200" cy="8.300" rx="5.300" ry="7.400" fill="url(#ag12)"/><path d="M5.300 7.500h3.500v1.200H5.300zM10.700 7.500h3.600v1.200h-3.600z" fill="#303030"/><path d="M9.300 8.500h1.300v3H9.300z" fill="#dcdcdc"/><path d="M4.800 12.600c1.500-.9 3.200.2 5.200-.4 2-.6 3.900-.3 5.200.4l2.600 2.400c-.8 3.400-4.400 5.400-7.800 5.400s-5.600-1.500-6.600-4z" fill="url(#ab12)"/><ellipse cx="9.300" cy="15.300" rx="2" ry="1.800" fill="#b0b0b0"/><ellipse cx="9.800" cy="13.400" rx="1.300" ry=".55" fill="#111"/></g></g></svg>
<div class="a pill" style="left:856px;top:805px;width:113px;background:#f9d900;letter-spacing:-0.249px;color:#3b3500;-webkit-text-stroke:.15px currentColor;">Templado</div>
<div class="a pill" style="left:975px;top:805px;width:135px;background:#2f80b9;letter-spacing:-0.186px;">Bicicleta de carretera</div>
<div class="a pill" style="left:1116px;top:805px;width:114px;background:#fd7faa;letter-spacing:-0.331px;">Femenino</div>
<div class="a pill" style="left:1236.2px;top:805px;width:113.6px;background:#ff7800;letter-spacing:0.111px;">Adulto</div>
<div class="a cl" style="top:805px;letter-spacing:-0.443px">Two Wheels Empori...</div>
<div class="a tag" style="top:808px;width:92.5px;letter-spacing:-0.389px">Two Wheels Emporium</div>
<svg class="ic" style="left:1610.2px;top:811.5px" width="9.300" height="8.600" viewBox="0 0 12 11"><path d="M6 1.400l1.300 2.900 3.100.400-2.300 2.100.600 3.100L6 8.400l-2.700 1.500.600-3.100-2.300-2.100 3.100-.400z" fill="#fdc935" stroke="#fdc935" stroke-width="1.900" stroke-linejoin="round"/></svg>
<svg class="ic" style="left:1621.6px;top:811.5px" width="9.300" height="8.600" viewBox="0 0 12 11"><path d="M6 1.400l1.300 2.900 3.100.400-2.300 2.100.600 3.100L6 8.400l-2.700 1.500.600-3.100-2.300-2.100 3.100-.400z" fill="#fdc935" stroke="#fdc935" stroke-width="1.900" stroke-linejoin="round"/></svg>
<svg class="ic" style="left:1633px;top:811.5px" width="9.300" height="8.600" viewBox="0 0 12 11"><path d="M6 1.400l1.300 2.900 3.100.400-2.300 2.100.600 3.100L6 8.400l-2.700 1.500.600-3.100-2.300-2.100 3.100-.400z" fill="#fdc935" stroke="#fdc935" stroke-width="1.900" stroke-linejoin="round"/></svg>
<div class="a " style="left:1738.3px;top:805.6px;height:20px;line-height:20px;font-size:10.9px;letter-spacing:-0.591px;">€1,175</div>
<div class="a " style="left:1858.4px;top:805.6px;height:20px;line-height:20px;font-size:11.2px;letter-spacing:0.000px;">2</div>
<div class="a rb" style="left:277px;top:828px;width:1625px;height:1px;opacity:0.45"></div>
<div class="a rb" style="left:277px;top:829px;width:1625px;height:1px;opacity:0.55"></div>
<svg class="ic" style="left:297.8px;top:836.7px" width="12.4" height="12.4" viewBox="0 0 13 13"><circle cx="6.500" cy="6.500" r="5.500" fill="none" stroke="#5f48ea" stroke-width="1.250"/><circle cx="6.500" cy="6.500" r="3.500" fill="#5f48ea"/></svg>
<div class="a " style="left:319.2px;top:832.2px;height:20px;line-height:20px;font-size:11.2px;letter-spacing:-0.313px;">Bicicleta de carretera para mujer: Lavender Lancer 1150 Morado Lujoso</div>
<div class="a av" style="left:737.9px;top:832.9px;width:19px;height:19px;">P</div>
<div class="a pill" style="left:856px;top:832px;width:113px;background:#f9d900;letter-spacing:-0.249px;color:#3b3500;-webkit-text-stroke:.15px currentColor;">Templado</div>
<div class="a pill" style="left:975px;top:832px;width:135px;background:#2f80b9;letter-spacing:-0.186px;">Bicicleta de carretera</div>
<div class="a pill" style="left:1116px;top:832px;width:114px;background:#fd7faa;letter-spacing:-0.331px;">Femenino</div>
<div class="a pill" style="left:1236.2px;top:832px;width:113.6px;background:#ff7800;letter-spacing:0.111px;">Adulto</div>
<div class="a cl" style="top:832px;letter-spacing:-0.421px">Saddle &amp; Spoke</div>
<div class="a tag" style="top:835px;width:67px;letter-spacing:-0.431px">Saddle &amp; Spoke</div>
<svg class="ic" style="left:1610.2px;top:838.5px" width="9.300" height="8.600" viewBox="0 0 12 11"><path d="M6 1.400l1.300 2.900 3.100.400-2.300 2.100.600 3.100L6 8.400l-2.700 1.500.600-3.100-2.300-2.100 3.100-.400z" fill="#fdc935" stroke="#fdc935" stroke-width="1.900" stroke-linejoin="round"/></svg>
<svg class="ic" style="left:1621.6px;top:838.5px" width="9.300" height="8.600" viewBox="0 0 12 11"><path d="M6 1.400l1.300 2.900 3.100.400-2.300 2.100.600 3.100L6 8.400l-2.700 1.500.600-3.100-2.300-2.100 3.100-.400z" fill="#fdc935" stroke="#fdc935" stroke-width="1.900" stroke-linejoin="round"/></svg>
<svg class="ic" style="left:1633px;top:838.5px" width="9.300" height="8.600" viewBox="0 0 12 11"><path d="M6 1.400l1.300 2.900 3.100.400-2.300 2.100.600 3.100L6 8.400l-2.700 1.500.600-3.100-2.300-2.100 3.100-.400z" fill="#fdc935" stroke="#fdc935" stroke-width="1.900" stroke-linejoin="round"/></svg>
<div class="a " style="left:1738.3px;top:832.6px;height:20px;line-height:20px;font-size:10.9px;letter-spacing:-0.591px;">€1,175</div>
<div class="a " style="left:1858.4px;top:832.6px;height:20px;line-height:20px;font-size:11.2px;letter-spacing:0.000px;">3</div>
<div class="a rb" style="left:277px;top:854px;width:1625px;height:1px;opacity:0.20"></div>
<div class="a rb" style="left:277px;top:855px;width:1625px;height:1px;opacity:0.80"></div>
<svg class="ic" style="left:297.8px;top:862.7px" width="12.4" height="12.4" viewBox="0 0 13 13"><circle cx="6.500" cy="6.500" r="5.500" fill="none" stroke="#5f48ea" stroke-width="1.250"/><circle cx="6.500" cy="6.500" r="3.500" fill="#5f48ea"/></svg>
<div class="a " style="left:319.2px;top:858.2px;height:20px;line-height:20px;font-size:11.2px;letter-spacing:-0.293px;">Bicicleta de montaña para niños: Blue Sky 250 Azul Cielo</div>
<div class="a av" style="left:737.9px;top:858.9px;width:19px;height:19px;">A</div>
<div class="a pill" style="left:856px;top:858px;width:113px;background:#ff7800;letter-spacing:-0.282px;">Caliente</div>
<div class="a pill" style="left:975px;top:858px;width:135px;background:#e50000;letter-spacing:-0.129px;">Bicicleta de montaña</div>
<div class="a pill" style="left:1116px;top:858px;width:114px;background:#3498db;letter-spacing:-0.188px;">Masculino</div>
<div class="a pill" style="left:1236.2px;top:858px;width:113.6px;background:#7c4dff;letter-spacing:0.006px;">Infantil</div>
<div class="a cl" style="top:858px;letter-spacing:-0.626px">PedalPioneer</div>
<div class="a tag" style="top:861px;width:56.6px;letter-spacing:-0.517px">PedalPioneer</div>
<svg class="ic" style="left:1610.2px;top:864.5px" width="9.300" height="8.600" viewBox="0 0 12 11"><path d="M6 1.400l1.300 2.900 3.100.400-2.300 2.100.600 3.100L6 8.400l-2.700 1.500.600-3.100-2.300-2.100 3.100-.400z" fill="#fdc935" stroke="#fdc935" stroke-width="1.900" stroke-linejoin="round"/></svg>
<div class="a " style="left:1738.3px;top:858.6px;height:20px;line-height:20px;font-size:10.9px;letter-spacing:-0.590px;">€160</div>
<div class="a " style="left:1858.4px;top:858.6px;height:20px;line-height:20px;font-size:11.2px;letter-spacing:0.000px;">4</div>
<div class="a rb" style="left:277px;top:881px;width:1625px;height:1px;"></div>
<svg class="ic" style="left:297.8px;top:888.7px" width="12.4" height="12.4" viewBox="0 0 13 13"><circle cx="6.500" cy="6.500" r="5.500" fill="none" stroke="#5f48ea" stroke-width="1.250"/><circle cx="6.500" cy="6.500" r="3.500" fill="#5f48ea"/></svg>
<div class="a " style="left:319.2px;top:884.2px;height:20px;line-height:20px;font-size:11.2px;letter-spacing:-0.238px;">Bicicleta de montaña para niños: Little Daredevil 280 Naranja Atardecer</div>
<div class="a av" style="left:737.9px;top:884.9px;width:19px;height:19px;">A</div>
<div class="a pill" style="left:856px;top:884px;width:113px;background:#f9d900;letter-spacing:-0.249px;color:#3b3500;-webkit-text-stroke:.15px currentColor;">Templado</div>
<div class="a pill" style="left:975px;top:884px;width:135px;background:#e50000;letter-spacing:-0.129px;">Bicicleta de montaña</div>
<div class="a pill" style="left:1116px;top:884px;width:114px;background:#3498db;letter-spacing:-0.188px;">Masculino</div>
<div class="a pill" style="left:1236.2px;top:884px;width:113.6px;background:#7c4dff;letter-spacing:0.006px;">Infantil</div>
<div class="a cl" style="top:884px;letter-spacing:-0.595px">GearShifters</div>
<div class="a tag" style="top:887px;width:53.1px;letter-spacing:-0.571px">GearShifters</div>
<svg class="ic" style="left:1610.2px;top:890.5px" width="9.300" height="8.600" viewBox="0 0 12 11"><path d="M6 1.400l1.300 2.900 3.100.400-2.300 2.100.600 3.100L6 8.400l-2.700 1.500.600-3.100-2.300-2.100 3.100-.400z" fill="#fdc935" stroke="#fdc935" stroke-width="1.900" stroke-linejoin="round"/></svg>
<div class="a " style="left:1738.3px;top:884.6px;height:20px;line-height:20px;font-size:10.9px;letter-spacing:-0.590px;">€160</div>
<div class="a " style="left:1858.4px;top:884.6px;height:20px;line-height:20px;font-size:11.2px;letter-spacing:0.000px;">5</div>
<div class="a rb" style="left:277px;top:907px;width:1625px;height:1px;opacity:0.70"></div>
<div class="a rb" style="left:277px;top:908px;width:1625px;height:1px;opacity:0.30"></div>
<svg class="ic" style="left:297.8px;top:914.7px" width="12.4" height="12.4" viewBox="0 0 13 13"><circle cx="6.500" cy="6.500" r="5.500" fill="none" stroke="#5f48ea" stroke-width="1.250"/><circle cx="6.500" cy="6.500" r="3.500" fill="#5f48ea"/></svg>
<div class="a " style="left:319.2px;top:910.2px;height:20px;line-height:20px;font-size:11.2px;letter-spacing:-0.303px;">Bicicleta de montaña para niños: Rocky Roadster 220 Gris Granito</div>
<div class="a av" style="left:737.9px;top:910.9px;width:19px;height:19px;">A</div>
<div class="a pill" style="left:856px;top:910px;width:113px;background:#04a9f4;letter-spacing:-0.517px;">Frio</div>
<div class="a pill" style="left:975px;top:910px;width:135px;background:#e50000;letter-spacing:-0.129px;">Bicicleta de montaña</div>
<div class="a pill" style="left:1116px;top:910px;width:114px;background:#3498db;letter-spacing:-0.188px;">Masculino</div>
<div class="a pill" style="left:1236.2px;top:910px;width:113.6px;background:#7c4dff;letter-spacing:0.006px;">Infantil</div>
<div class="a cl" style="top:910px;letter-spacing:-0.595px">GearShifters</div>
<div class="a tag" style="top:913px;width:53.1px;letter-spacing:-0.571px">GearShifters</div>
<svg class="ic" style="left:1610.2px;top:916.5px" width="9.300" height="8.600" viewBox="0 0 12 11"><path d="M6 1.400l1.300 2.900 3.100.400-2.300 2.100.600 3.100L6 8.400l-2.700 1.500.600-3.100-2.300-2.100 3.100-.400z" fill="#fdc935" stroke="#fdc935" stroke-width="1.900" stroke-linejoin="round"/></svg>
<div class="a " style="left:1738.3px;top:910.6px;height:20px;line-height:20px;font-size:10.9px;letter-spacing:-0.590px;">€160</div>
<div class="a " style="left:1858.4px;top:910.6px;height:20px;line-height:20px;font-size:11.2px;letter-spacing:0.000px;">5</div>
<div class="a rb" style="left:277px;top:933px;width:455px;height:1px;opacity:0.45"></div>
<div class="a rb" style="left:277px;top:934px;width:455px;height:1px;opacity:0.55"></div>
<div class="a " style="left:252px;top:936px;width:1188px;height:7px;background:#adb3bd"></div>
<svg class="ic" style="left:1894.500px;top:936.500px" width="3.500" height="5.500" viewBox="0 0 4 6"><path d="M0 0 4 3 0 6z" fill="#adb3bd"/></svg>
<div class="a " style="left:1903.5px;top:174px;width:1.5px;height:204px;background:#6f788a"></div>
</div>
</body></html>
